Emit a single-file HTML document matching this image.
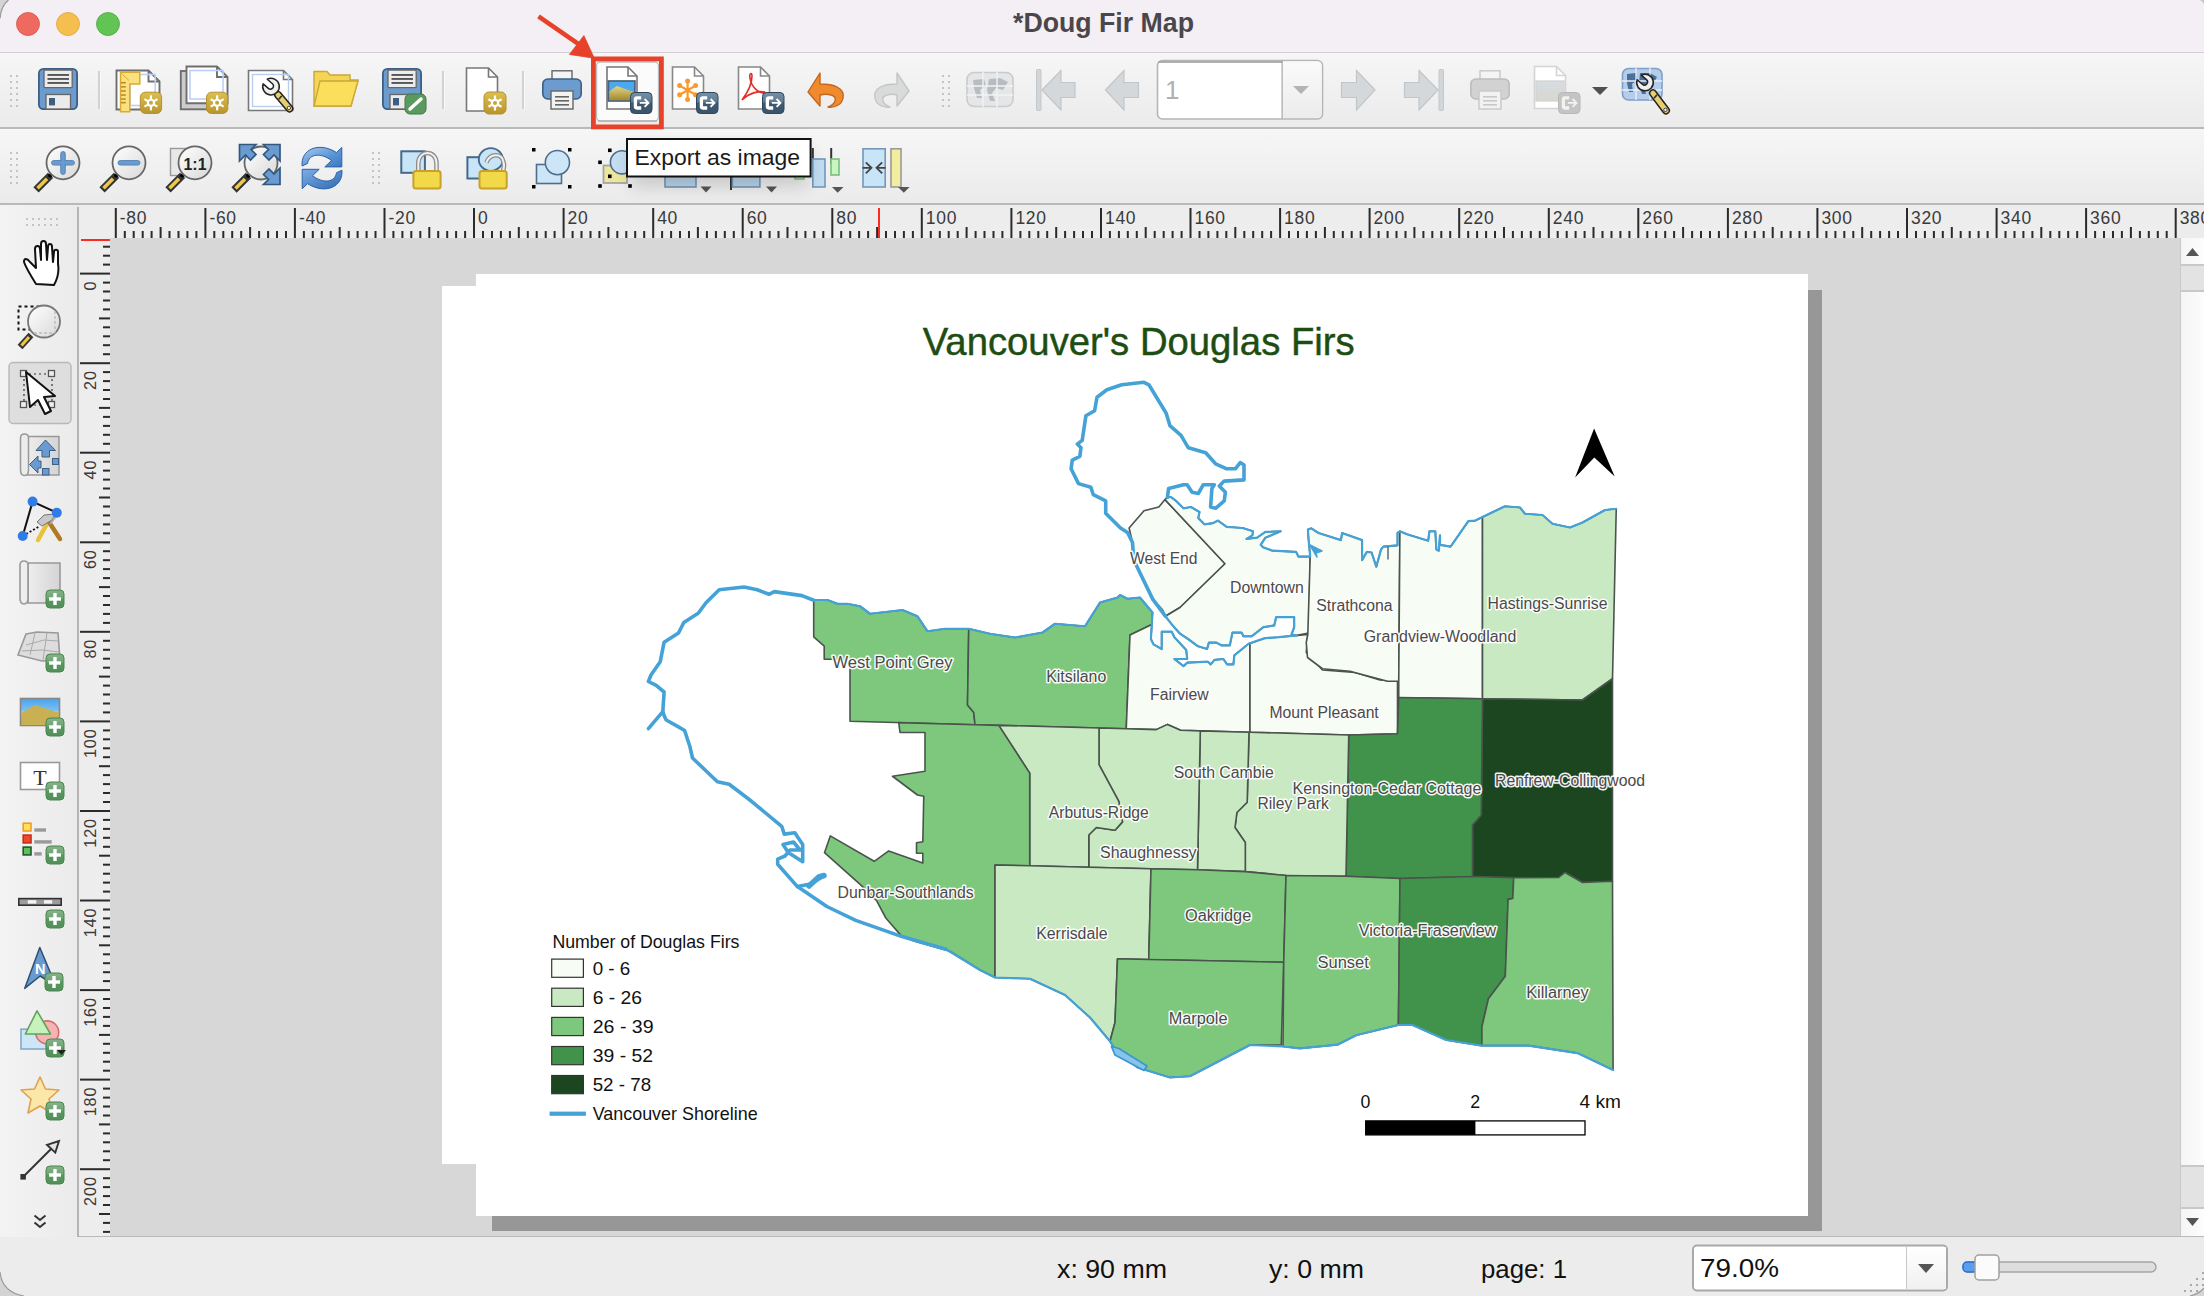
<!DOCTYPE html>
<html><head><meta charset="utf-8"><title>Doug Fir Map</title>
<style>html,body{margin:0;padding:0;overflow:hidden;background:#ececec;} svg{display:block;}</style></head>
<body><svg width="2204" height="1296" viewBox="0 0 2204 1296" style="font-family:'Liberation Sans', sans-serif">
<defs>
<linearGradient id="glass" x1="0" y1="0" x2="1" y2="1"><stop offset="0" stop-color="#ffffff"/><stop offset="1" stop-color="#d8d8d8"/></linearGradient>
<linearGradient id="pic" x1="0" y1="0" x2="0" y2="1"><stop offset="0" stop-color="#4aa3ea"/><stop offset="0.45" stop-color="#7cc0f0"/><stop offset="0.46" stop-color="#d9c47a"/><stop offset="1" stop-color="#a89233"/></linearGradient>
<linearGradient id="gpic" x1="0" y1="0" x2="0" y2="1"><stop offset="0" stop-color="#d6dde3"/><stop offset="1" stop-color="#d9d6cc"/></linearGradient>
<linearGradient id="gold" x1="0" y1="0" x2="0" y2="1"><stop offset="0" stop-color="#dcc04e"/><stop offset="1" stop-color="#b9952c"/></linearGradient>
<linearGradient id="roll" x1="0" y1="0" x2="1" y2="0"><stop offset="0" stop-color="#eeeeee"/><stop offset="1" stop-color="#d4d4d4"/></linearGradient>
<linearGradient id="refr" x1="0" y1="0" x2="1" y2="1"><stop offset="0" stop-color="#a9cbef"/><stop offset="0.55" stop-color="#5d97d6"/><stop offset="1" stop-color="#3a78c3"/></linearGradient><linearGradient id="refr2" x1="0" y1="0" x2="1" y2="1"><stop offset="0" stop-color="#7eaee3"/><stop offset="1" stop-color="#2f6ab5"/></linearGradient>
<linearGradient id="gplus" x1="0" y1="0" x2="0" y2="1"><stop offset="0" stop-color="#86b38a"/><stop offset="0.45" stop-color="#6ea473"/><stop offset="0.5" stop-color="#5a975f"/><stop offset="1" stop-color="#558f5a"/></linearGradient>
<linearGradient id="ebadge" x1="0" y1="0" x2="0" y2="1"><stop offset="0" stop-color="#7690a6"/><stop offset="0.45" stop-color="#5f7a91"/><stop offset="0.5" stop-color="#3f5a70"/><stop offset="1" stop-color="#3a556b"/></linearGradient>
<linearGradient id="hill" x1="0" y1="0" x2="0" y2="1"><stop offset="0" stop-color="#e3d48a"/><stop offset="1" stop-color="#a3892c"/></linearGradient>
<filter id="tipsh" x="-30%" y="-50%" width="160%" height="250%"><feGaussianBlur stdDeviation="9"/></filter>
</defs>
<rect x="0" y="0" width="2204" height="52" fill="#f3eff5"/>
<rect x="0" y="52" width="2204" height="1" fill="#d3d0d5"/>
<circle cx="28" cy="24" r="11.5" fill="#ee6a5f" stroke="#d9534a" stroke-width="0.8"/>
<circle cx="68" cy="24" r="11.5" fill="#f5bf4f" stroke="#dea63a" stroke-width="0.8"/>
<circle cx="108" cy="24" r="11.5" fill="#61c454" stroke="#4eaa41" stroke-width="0.8"/>
<text x="1103.5" y="32" text-anchor="middle" font-family='"Liberation Sans", sans-serif' font-weight="700" font-size="27" fill="#4a474c" textLength="181" lengthAdjust="spacingAndGlyphs">*Doug Fir Map</text>
<defs><linearGradient id="tbg" x1="0" y1="0" x2="0" y2="1"><stop offset="0" stop-color="#f6f6f6"/><stop offset="1" stop-color="#ebebeb"/></linearGradient><linearGradient id="lbg" x1="0" y1="0" x2="1" y2="0"><stop offset="0" stop-color="#f3f3f3"/><stop offset="1" stop-color="#ebebeb"/></linearGradient></defs>
<rect x="0" y="53" width="2204" height="74" fill="url(#tbg)"/>
<rect x="0" y="127" width="2204" height="2" fill="#b9b9b9"/>
<rect x="0" y="129" width="2204" height="74" fill="url(#tbg)"/>
<rect x="0" y="203" width="2204" height="2" fill="#b9b9b9"/>
<rect x="10" y="75" width="2" height="2" fill="#c4c4c4"/><rect x="16" y="75" width="2" height="2" fill="#c4c4c4"/><rect x="10" y="81" width="2" height="2" fill="#c4c4c4"/><rect x="16" y="81" width="2" height="2" fill="#c4c4c4"/><rect x="10" y="87" width="2" height="2" fill="#c4c4c4"/><rect x="16" y="87" width="2" height="2" fill="#c4c4c4"/><rect x="10" y="93" width="2" height="2" fill="#c4c4c4"/><rect x="16" y="93" width="2" height="2" fill="#c4c4c4"/><rect x="10" y="99" width="2" height="2" fill="#c4c4c4"/><rect x="16" y="99" width="2" height="2" fill="#c4c4c4"/><rect x="10" y="105" width="2" height="2" fill="#c4c4c4"/><rect x="16" y="105" width="2" height="2" fill="#c4c4c4"/>
<rect x="942" y="75" width="2" height="2" fill="#c4c4c4"/><rect x="948" y="75" width="2" height="2" fill="#c4c4c4"/><rect x="942" y="81" width="2" height="2" fill="#c4c4c4"/><rect x="948" y="81" width="2" height="2" fill="#c4c4c4"/><rect x="942" y="87" width="2" height="2" fill="#c4c4c4"/><rect x="948" y="87" width="2" height="2" fill="#c4c4c4"/><rect x="942" y="93" width="2" height="2" fill="#c4c4c4"/><rect x="948" y="93" width="2" height="2" fill="#c4c4c4"/><rect x="942" y="99" width="2" height="2" fill="#c4c4c4"/><rect x="948" y="99" width="2" height="2" fill="#c4c4c4"/><rect x="942" y="105" width="2" height="2" fill="#c4c4c4"/><rect x="948" y="105" width="2" height="2" fill="#c4c4c4"/>
<rect x="10" y="152" width="2" height="2" fill="#c4c4c4"/><rect x="16" y="152" width="2" height="2" fill="#c4c4c4"/><rect x="10" y="158" width="2" height="2" fill="#c4c4c4"/><rect x="16" y="158" width="2" height="2" fill="#c4c4c4"/><rect x="10" y="164" width="2" height="2" fill="#c4c4c4"/><rect x="16" y="164" width="2" height="2" fill="#c4c4c4"/><rect x="10" y="170" width="2" height="2" fill="#c4c4c4"/><rect x="16" y="170" width="2" height="2" fill="#c4c4c4"/><rect x="10" y="176" width="2" height="2" fill="#c4c4c4"/><rect x="16" y="176" width="2" height="2" fill="#c4c4c4"/><rect x="10" y="182" width="2" height="2" fill="#c4c4c4"/><rect x="16" y="182" width="2" height="2" fill="#c4c4c4"/>
<rect x="372" y="152" width="2" height="2" fill="#c4c4c4"/><rect x="378" y="152" width="2" height="2" fill="#c4c4c4"/><rect x="372" y="158" width="2" height="2" fill="#c4c4c4"/><rect x="378" y="158" width="2" height="2" fill="#c4c4c4"/><rect x="372" y="164" width="2" height="2" fill="#c4c4c4"/><rect x="378" y="164" width="2" height="2" fill="#c4c4c4"/><rect x="372" y="170" width="2" height="2" fill="#c4c4c4"/><rect x="378" y="170" width="2" height="2" fill="#c4c4c4"/><rect x="372" y="176" width="2" height="2" fill="#c4c4c4"/><rect x="378" y="176" width="2" height="2" fill="#c4c4c4"/><rect x="372" y="182" width="2" height="2" fill="#c4c4c4"/><rect x="378" y="182" width="2" height="2" fill="#c4c4c4"/>
<rect x="98" y="71" width="2" height="38" fill="#d2d2d2"/><rect x="100" y="71" width="1" height="38" fill="#fafafa"/>
<rect x="442" y="71" width="2" height="38" fill="#d2d2d2"/><rect x="444" y="71" width="1" height="38" fill="#fafafa"/>
<rect x="522" y="71" width="2" height="38" fill="#d2d2d2"/><rect x="524" y="71" width="1" height="38" fill="#fafafa"/>
<rect x="0" y="205" width="78" height="1032" fill="url(#lbg)"/>
<rect x="77" y="207" width="2" height="1030" fill="#b4b4b4"/>
<rect x="26" y="218" width="2" height="2" fill="#c4c4c4"/><rect x="32" y="218" width="2" height="2" fill="#c4c4c4"/><rect x="38" y="218" width="2" height="2" fill="#c4c4c4"/><rect x="44" y="218" width="2" height="2" fill="#c4c4c4"/><rect x="50" y="218" width="2" height="2" fill="#c4c4c4"/><rect x="56" y="218" width="2" height="2" fill="#c4c4c4"/><rect x="26" y="224" width="2" height="2" fill="#c4c4c4"/><rect x="32" y="224" width="2" height="2" fill="#c4c4c4"/><rect x="38" y="224" width="2" height="2" fill="#c4c4c4"/><rect x="44" y="224" width="2" height="2" fill="#c4c4c4"/><rect x="50" y="224" width="2" height="2" fill="#c4c4c4"/><rect x="56" y="224" width="2" height="2" fill="#c4c4c4"/>
<rect x="79" y="205" width="2101" height="33" fill="#ededed"/>
<rect x="79" y="238" width="31" height="998" fill="#ededed"/>
<rect x="114.8" y="208" width="2" height="30" fill="#2b2b2b"/>
<text x="119.8" y="224" font-family='"Liberation Sans", sans-serif' font-size="17.5" letter-spacing="0.7" fill="#3a3a3a">-80</text>
<rect x="123.8" y="231" width="2" height="7" fill="#2b2b2b"/>
<rect x="132.7" y="231" width="2" height="7" fill="#2b2b2b"/>
<rect x="141.7" y="231" width="2" height="7" fill="#2b2b2b"/>
<rect x="150.6" y="231" width="2" height="7" fill="#2b2b2b"/>
<rect x="159.6" y="227" width="2" height="11" fill="#2b2b2b"/>
<rect x="168.5" y="231" width="2" height="7" fill="#2b2b2b"/>
<rect x="177.5" y="231" width="2" height="7" fill="#2b2b2b"/>
<rect x="186.4" y="231" width="2" height="7" fill="#2b2b2b"/>
<rect x="195.4" y="231" width="2" height="7" fill="#2b2b2b"/>
<rect x="204.4" y="208" width="2" height="30" fill="#2b2b2b"/>
<text x="209.4" y="224" font-family='"Liberation Sans", sans-serif' font-size="17.5" letter-spacing="0.7" fill="#3a3a3a">-60</text>
<rect x="213.3" y="231" width="2" height="7" fill="#2b2b2b"/>
<rect x="222.3" y="231" width="2" height="7" fill="#2b2b2b"/>
<rect x="231.2" y="231" width="2" height="7" fill="#2b2b2b"/>
<rect x="240.2" y="231" width="2" height="7" fill="#2b2b2b"/>
<rect x="249.1" y="227" width="2" height="11" fill="#2b2b2b"/>
<rect x="258.1" y="231" width="2" height="7" fill="#2b2b2b"/>
<rect x="267.1" y="231" width="2" height="7" fill="#2b2b2b"/>
<rect x="276.0" y="231" width="2" height="7" fill="#2b2b2b"/>
<rect x="285.0" y="231" width="2" height="7" fill="#2b2b2b"/>
<rect x="293.9" y="208" width="2" height="30" fill="#2b2b2b"/>
<text x="298.9" y="224" font-family='"Liberation Sans", sans-serif' font-size="17.5" letter-spacing="0.7" fill="#3a3a3a">-40</text>
<rect x="302.9" y="231" width="2" height="7" fill="#2b2b2b"/>
<rect x="311.8" y="231" width="2" height="7" fill="#2b2b2b"/>
<rect x="320.8" y="231" width="2" height="7" fill="#2b2b2b"/>
<rect x="329.7" y="231" width="2" height="7" fill="#2b2b2b"/>
<rect x="338.7" y="227" width="2" height="11" fill="#2b2b2b"/>
<rect x="347.7" y="231" width="2" height="7" fill="#2b2b2b"/>
<rect x="356.6" y="231" width="2" height="7" fill="#2b2b2b"/>
<rect x="365.6" y="231" width="2" height="7" fill="#2b2b2b"/>
<rect x="374.5" y="231" width="2" height="7" fill="#2b2b2b"/>
<rect x="383.5" y="208" width="2" height="30" fill="#2b2b2b"/>
<text x="388.5" y="224" font-family='"Liberation Sans", sans-serif' font-size="17.5" letter-spacing="0.7" fill="#3a3a3a">-20</text>
<rect x="392.4" y="231" width="2" height="7" fill="#2b2b2b"/>
<rect x="401.4" y="231" width="2" height="7" fill="#2b2b2b"/>
<rect x="410.3" y="231" width="2" height="7" fill="#2b2b2b"/>
<rect x="419.3" y="231" width="2" height="7" fill="#2b2b2b"/>
<rect x="428.3" y="227" width="2" height="11" fill="#2b2b2b"/>
<rect x="437.2" y="231" width="2" height="7" fill="#2b2b2b"/>
<rect x="446.2" y="231" width="2" height="7" fill="#2b2b2b"/>
<rect x="455.1" y="231" width="2" height="7" fill="#2b2b2b"/>
<rect x="464.1" y="231" width="2" height="7" fill="#2b2b2b"/>
<rect x="473.0" y="208" width="2" height="30" fill="#2b2b2b"/>
<text x="478.0" y="224" font-family='"Liberation Sans", sans-serif' font-size="17.5" letter-spacing="0.7" fill="#3a3a3a">0</text>
<rect x="482.0" y="231" width="2" height="7" fill="#2b2b2b"/>
<rect x="491.0" y="231" width="2" height="7" fill="#2b2b2b"/>
<rect x="499.9" y="231" width="2" height="7" fill="#2b2b2b"/>
<rect x="508.9" y="231" width="2" height="7" fill="#2b2b2b"/>
<rect x="517.8" y="227" width="2" height="11" fill="#2b2b2b"/>
<rect x="526.8" y="231" width="2" height="7" fill="#2b2b2b"/>
<rect x="535.7" y="231" width="2" height="7" fill="#2b2b2b"/>
<rect x="544.7" y="231" width="2" height="7" fill="#2b2b2b"/>
<rect x="553.6" y="231" width="2" height="7" fill="#2b2b2b"/>
<rect x="562.6" y="208" width="2" height="30" fill="#2b2b2b"/>
<text x="567.6" y="224" font-family='"Liberation Sans", sans-serif' font-size="17.5" letter-spacing="0.7" fill="#3a3a3a">20</text>
<rect x="571.6" y="231" width="2" height="7" fill="#2b2b2b"/>
<rect x="580.5" y="231" width="2" height="7" fill="#2b2b2b"/>
<rect x="589.5" y="231" width="2" height="7" fill="#2b2b2b"/>
<rect x="598.4" y="231" width="2" height="7" fill="#2b2b2b"/>
<rect x="607.4" y="227" width="2" height="11" fill="#2b2b2b"/>
<rect x="616.3" y="231" width="2" height="7" fill="#2b2b2b"/>
<rect x="625.3" y="231" width="2" height="7" fill="#2b2b2b"/>
<rect x="634.2" y="231" width="2" height="7" fill="#2b2b2b"/>
<rect x="643.2" y="231" width="2" height="7" fill="#2b2b2b"/>
<rect x="652.2" y="208" width="2" height="30" fill="#2b2b2b"/>
<text x="657.2" y="224" font-family='"Liberation Sans", sans-serif' font-size="17.5" letter-spacing="0.7" fill="#3a3a3a">40</text>
<rect x="661.1" y="231" width="2" height="7" fill="#2b2b2b"/>
<rect x="670.1" y="231" width="2" height="7" fill="#2b2b2b"/>
<rect x="679.0" y="231" width="2" height="7" fill="#2b2b2b"/>
<rect x="688.0" y="231" width="2" height="7" fill="#2b2b2b"/>
<rect x="696.9" y="227" width="2" height="11" fill="#2b2b2b"/>
<rect x="705.9" y="231" width="2" height="7" fill="#2b2b2b"/>
<rect x="714.9" y="231" width="2" height="7" fill="#2b2b2b"/>
<rect x="723.8" y="231" width="2" height="7" fill="#2b2b2b"/>
<rect x="732.8" y="231" width="2" height="7" fill="#2b2b2b"/>
<rect x="741.7" y="208" width="2" height="30" fill="#2b2b2b"/>
<text x="746.7" y="224" font-family='"Liberation Sans", sans-serif' font-size="17.5" letter-spacing="0.7" fill="#3a3a3a">60</text>
<rect x="750.7" y="231" width="2" height="7" fill="#2b2b2b"/>
<rect x="759.6" y="231" width="2" height="7" fill="#2b2b2b"/>
<rect x="768.6" y="231" width="2" height="7" fill="#2b2b2b"/>
<rect x="777.5" y="231" width="2" height="7" fill="#2b2b2b"/>
<rect x="786.5" y="227" width="2" height="11" fill="#2b2b2b"/>
<rect x="795.5" y="231" width="2" height="7" fill="#2b2b2b"/>
<rect x="804.4" y="231" width="2" height="7" fill="#2b2b2b"/>
<rect x="813.4" y="231" width="2" height="7" fill="#2b2b2b"/>
<rect x="822.3" y="231" width="2" height="7" fill="#2b2b2b"/>
<rect x="831.3" y="208" width="2" height="30" fill="#2b2b2b"/>
<text x="836.3" y="224" font-family='"Liberation Sans", sans-serif' font-size="17.5" letter-spacing="0.7" fill="#3a3a3a">80</text>
<rect x="840.2" y="231" width="2" height="7" fill="#2b2b2b"/>
<rect x="849.2" y="231" width="2" height="7" fill="#2b2b2b"/>
<rect x="858.1" y="231" width="2" height="7" fill="#2b2b2b"/>
<rect x="867.1" y="231" width="2" height="7" fill="#2b2b2b"/>
<rect x="876.1" y="227" width="2" height="11" fill="#2b2b2b"/>
<rect x="885.0" y="231" width="2" height="7" fill="#2b2b2b"/>
<rect x="894.0" y="231" width="2" height="7" fill="#2b2b2b"/>
<rect x="902.9" y="231" width="2" height="7" fill="#2b2b2b"/>
<rect x="911.9" y="231" width="2" height="7" fill="#2b2b2b"/>
<rect x="920.8" y="208" width="2" height="30" fill="#2b2b2b"/>
<text x="925.8" y="224" font-family='"Liberation Sans", sans-serif' font-size="17.5" letter-spacing="0.7" fill="#3a3a3a">100</text>
<rect x="929.8" y="231" width="2" height="7" fill="#2b2b2b"/>
<rect x="938.8" y="231" width="2" height="7" fill="#2b2b2b"/>
<rect x="947.7" y="231" width="2" height="7" fill="#2b2b2b"/>
<rect x="956.7" y="231" width="2" height="7" fill="#2b2b2b"/>
<rect x="965.6" y="227" width="2" height="11" fill="#2b2b2b"/>
<rect x="974.6" y="231" width="2" height="7" fill="#2b2b2b"/>
<rect x="983.5" y="231" width="2" height="7" fill="#2b2b2b"/>
<rect x="992.5" y="231" width="2" height="7" fill="#2b2b2b"/>
<rect x="1001.4" y="231" width="2" height="7" fill="#2b2b2b"/>
<rect x="1010.4" y="208" width="2" height="30" fill="#2b2b2b"/>
<text x="1015.4" y="224" font-family='"Liberation Sans", sans-serif' font-size="17.5" letter-spacing="0.7" fill="#3a3a3a">120</text>
<rect x="1019.4" y="231" width="2" height="7" fill="#2b2b2b"/>
<rect x="1028.3" y="231" width="2" height="7" fill="#2b2b2b"/>
<rect x="1037.3" y="231" width="2" height="7" fill="#2b2b2b"/>
<rect x="1046.2" y="231" width="2" height="7" fill="#2b2b2b"/>
<rect x="1055.2" y="227" width="2" height="11" fill="#2b2b2b"/>
<rect x="1064.1" y="231" width="2" height="7" fill="#2b2b2b"/>
<rect x="1073.1" y="231" width="2" height="7" fill="#2b2b2b"/>
<rect x="1082.0" y="231" width="2" height="7" fill="#2b2b2b"/>
<rect x="1091.0" y="231" width="2" height="7" fill="#2b2b2b"/>
<rect x="1100.0" y="208" width="2" height="30" fill="#2b2b2b"/>
<text x="1105.0" y="224" font-family='"Liberation Sans", sans-serif' font-size="17.5" letter-spacing="0.7" fill="#3a3a3a">140</text>
<rect x="1108.9" y="231" width="2" height="7" fill="#2b2b2b"/>
<rect x="1117.9" y="231" width="2" height="7" fill="#2b2b2b"/>
<rect x="1126.8" y="231" width="2" height="7" fill="#2b2b2b"/>
<rect x="1135.8" y="231" width="2" height="7" fill="#2b2b2b"/>
<rect x="1144.7" y="227" width="2" height="11" fill="#2b2b2b"/>
<rect x="1153.7" y="231" width="2" height="7" fill="#2b2b2b"/>
<rect x="1162.7" y="231" width="2" height="7" fill="#2b2b2b"/>
<rect x="1171.6" y="231" width="2" height="7" fill="#2b2b2b"/>
<rect x="1180.6" y="231" width="2" height="7" fill="#2b2b2b"/>
<rect x="1189.5" y="208" width="2" height="30" fill="#2b2b2b"/>
<text x="1194.5" y="224" font-family='"Liberation Sans", sans-serif' font-size="17.5" letter-spacing="0.7" fill="#3a3a3a">160</text>
<rect x="1198.5" y="231" width="2" height="7" fill="#2b2b2b"/>
<rect x="1207.4" y="231" width="2" height="7" fill="#2b2b2b"/>
<rect x="1216.4" y="231" width="2" height="7" fill="#2b2b2b"/>
<rect x="1225.3" y="231" width="2" height="7" fill="#2b2b2b"/>
<rect x="1234.3" y="227" width="2" height="11" fill="#2b2b2b"/>
<rect x="1243.3" y="231" width="2" height="7" fill="#2b2b2b"/>
<rect x="1252.2" y="231" width="2" height="7" fill="#2b2b2b"/>
<rect x="1261.2" y="231" width="2" height="7" fill="#2b2b2b"/>
<rect x="1270.1" y="231" width="2" height="7" fill="#2b2b2b"/>
<rect x="1279.1" y="208" width="2" height="30" fill="#2b2b2b"/>
<text x="1284.1" y="224" font-family='"Liberation Sans", sans-serif' font-size="17.5" letter-spacing="0.7" fill="#3a3a3a">180</text>
<rect x="1288.0" y="231" width="2" height="7" fill="#2b2b2b"/>
<rect x="1297.0" y="231" width="2" height="7" fill="#2b2b2b"/>
<rect x="1305.9" y="231" width="2" height="7" fill="#2b2b2b"/>
<rect x="1314.9" y="231" width="2" height="7" fill="#2b2b2b"/>
<rect x="1323.9" y="227" width="2" height="11" fill="#2b2b2b"/>
<rect x="1332.8" y="231" width="2" height="7" fill="#2b2b2b"/>
<rect x="1341.8" y="231" width="2" height="7" fill="#2b2b2b"/>
<rect x="1350.7" y="231" width="2" height="7" fill="#2b2b2b"/>
<rect x="1359.7" y="231" width="2" height="7" fill="#2b2b2b"/>
<rect x="1368.6" y="208" width="2" height="30" fill="#2b2b2b"/>
<text x="1373.6" y="224" font-family='"Liberation Sans", sans-serif' font-size="17.5" letter-spacing="0.7" fill="#3a3a3a">200</text>
<rect x="1377.6" y="231" width="2" height="7" fill="#2b2b2b"/>
<rect x="1386.6" y="231" width="2" height="7" fill="#2b2b2b"/>
<rect x="1395.5" y="231" width="2" height="7" fill="#2b2b2b"/>
<rect x="1404.5" y="231" width="2" height="7" fill="#2b2b2b"/>
<rect x="1413.4" y="227" width="2" height="11" fill="#2b2b2b"/>
<rect x="1422.4" y="231" width="2" height="7" fill="#2b2b2b"/>
<rect x="1431.3" y="231" width="2" height="7" fill="#2b2b2b"/>
<rect x="1440.3" y="231" width="2" height="7" fill="#2b2b2b"/>
<rect x="1449.2" y="231" width="2" height="7" fill="#2b2b2b"/>
<rect x="1458.2" y="208" width="2" height="30" fill="#2b2b2b"/>
<text x="1463.2" y="224" font-family='"Liberation Sans", sans-serif' font-size="17.5" letter-spacing="0.7" fill="#3a3a3a">220</text>
<rect x="1467.2" y="231" width="2" height="7" fill="#2b2b2b"/>
<rect x="1476.1" y="231" width="2" height="7" fill="#2b2b2b"/>
<rect x="1485.1" y="231" width="2" height="7" fill="#2b2b2b"/>
<rect x="1494.0" y="231" width="2" height="7" fill="#2b2b2b"/>
<rect x="1503.0" y="227" width="2" height="11" fill="#2b2b2b"/>
<rect x="1511.9" y="231" width="2" height="7" fill="#2b2b2b"/>
<rect x="1520.9" y="231" width="2" height="7" fill="#2b2b2b"/>
<rect x="1529.8" y="231" width="2" height="7" fill="#2b2b2b"/>
<rect x="1538.8" y="231" width="2" height="7" fill="#2b2b2b"/>
<rect x="1547.8" y="208" width="2" height="30" fill="#2b2b2b"/>
<text x="1552.8" y="224" font-family='"Liberation Sans", sans-serif' font-size="17.5" letter-spacing="0.7" fill="#3a3a3a">240</text>
<rect x="1556.7" y="231" width="2" height="7" fill="#2b2b2b"/>
<rect x="1565.7" y="231" width="2" height="7" fill="#2b2b2b"/>
<rect x="1574.6" y="231" width="2" height="7" fill="#2b2b2b"/>
<rect x="1583.6" y="231" width="2" height="7" fill="#2b2b2b"/>
<rect x="1592.5" y="227" width="2" height="11" fill="#2b2b2b"/>
<rect x="1601.5" y="231" width="2" height="7" fill="#2b2b2b"/>
<rect x="1610.5" y="231" width="2" height="7" fill="#2b2b2b"/>
<rect x="1619.4" y="231" width="2" height="7" fill="#2b2b2b"/>
<rect x="1628.4" y="231" width="2" height="7" fill="#2b2b2b"/>
<rect x="1637.3" y="208" width="2" height="30" fill="#2b2b2b"/>
<text x="1642.3" y="224" font-family='"Liberation Sans", sans-serif' font-size="17.5" letter-spacing="0.7" fill="#3a3a3a">260</text>
<rect x="1646.3" y="231" width="2" height="7" fill="#2b2b2b"/>
<rect x="1655.2" y="231" width="2" height="7" fill="#2b2b2b"/>
<rect x="1664.2" y="231" width="2" height="7" fill="#2b2b2b"/>
<rect x="1673.1" y="231" width="2" height="7" fill="#2b2b2b"/>
<rect x="1682.1" y="227" width="2" height="11" fill="#2b2b2b"/>
<rect x="1691.1" y="231" width="2" height="7" fill="#2b2b2b"/>
<rect x="1700.0" y="231" width="2" height="7" fill="#2b2b2b"/>
<rect x="1709.0" y="231" width="2" height="7" fill="#2b2b2b"/>
<rect x="1717.9" y="231" width="2" height="7" fill="#2b2b2b"/>
<rect x="1726.9" y="208" width="2" height="30" fill="#2b2b2b"/>
<text x="1731.9" y="224" font-family='"Liberation Sans", sans-serif' font-size="17.5" letter-spacing="0.7" fill="#3a3a3a">280</text>
<rect x="1735.8" y="231" width="2" height="7" fill="#2b2b2b"/>
<rect x="1744.8" y="231" width="2" height="7" fill="#2b2b2b"/>
<rect x="1753.7" y="231" width="2" height="7" fill="#2b2b2b"/>
<rect x="1762.7" y="231" width="2" height="7" fill="#2b2b2b"/>
<rect x="1771.7" y="227" width="2" height="11" fill="#2b2b2b"/>
<rect x="1780.6" y="231" width="2" height="7" fill="#2b2b2b"/>
<rect x="1789.6" y="231" width="2" height="7" fill="#2b2b2b"/>
<rect x="1798.5" y="231" width="2" height="7" fill="#2b2b2b"/>
<rect x="1807.5" y="231" width="2" height="7" fill="#2b2b2b"/>
<rect x="1816.4" y="208" width="2" height="30" fill="#2b2b2b"/>
<text x="1821.4" y="224" font-family='"Liberation Sans", sans-serif' font-size="17.5" letter-spacing="0.7" fill="#3a3a3a">300</text>
<rect x="1825.4" y="231" width="2" height="7" fill="#2b2b2b"/>
<rect x="1834.4" y="231" width="2" height="7" fill="#2b2b2b"/>
<rect x="1843.3" y="231" width="2" height="7" fill="#2b2b2b"/>
<rect x="1852.3" y="231" width="2" height="7" fill="#2b2b2b"/>
<rect x="1861.2" y="227" width="2" height="11" fill="#2b2b2b"/>
<rect x="1870.2" y="231" width="2" height="7" fill="#2b2b2b"/>
<rect x="1879.1" y="231" width="2" height="7" fill="#2b2b2b"/>
<rect x="1888.1" y="231" width="2" height="7" fill="#2b2b2b"/>
<rect x="1897.0" y="231" width="2" height="7" fill="#2b2b2b"/>
<rect x="1906.0" y="208" width="2" height="30" fill="#2b2b2b"/>
<text x="1911.0" y="224" font-family='"Liberation Sans", sans-serif' font-size="17.5" letter-spacing="0.7" fill="#3a3a3a">320</text>
<rect x="1915.0" y="231" width="2" height="7" fill="#2b2b2b"/>
<rect x="1923.9" y="231" width="2" height="7" fill="#2b2b2b"/>
<rect x="1932.9" y="231" width="2" height="7" fill="#2b2b2b"/>
<rect x="1941.8" y="231" width="2" height="7" fill="#2b2b2b"/>
<rect x="1950.8" y="227" width="2" height="11" fill="#2b2b2b"/>
<rect x="1959.7" y="231" width="2" height="7" fill="#2b2b2b"/>
<rect x="1968.7" y="231" width="2" height="7" fill="#2b2b2b"/>
<rect x="1977.6" y="231" width="2" height="7" fill="#2b2b2b"/>
<rect x="1986.6" y="231" width="2" height="7" fill="#2b2b2b"/>
<rect x="1995.6" y="208" width="2" height="30" fill="#2b2b2b"/>
<text x="2000.6" y="224" font-family='"Liberation Sans", sans-serif' font-size="17.5" letter-spacing="0.7" fill="#3a3a3a">340</text>
<rect x="2004.5" y="231" width="2" height="7" fill="#2b2b2b"/>
<rect x="2013.5" y="231" width="2" height="7" fill="#2b2b2b"/>
<rect x="2022.4" y="231" width="2" height="7" fill="#2b2b2b"/>
<rect x="2031.4" y="231" width="2" height="7" fill="#2b2b2b"/>
<rect x="2040.3" y="227" width="2" height="11" fill="#2b2b2b"/>
<rect x="2049.3" y="231" width="2" height="7" fill="#2b2b2b"/>
<rect x="2058.3" y="231" width="2" height="7" fill="#2b2b2b"/>
<rect x="2067.2" y="231" width="2" height="7" fill="#2b2b2b"/>
<rect x="2076.2" y="231" width="2" height="7" fill="#2b2b2b"/>
<rect x="2085.1" y="208" width="2" height="30" fill="#2b2b2b"/>
<text x="2090.1" y="224" font-family='"Liberation Sans", sans-serif' font-size="17.5" letter-spacing="0.7" fill="#3a3a3a">360</text>
<rect x="2094.1" y="231" width="2" height="7" fill="#2b2b2b"/>
<rect x="2103.0" y="231" width="2" height="7" fill="#2b2b2b"/>
<rect x="2112.0" y="231" width="2" height="7" fill="#2b2b2b"/>
<rect x="2120.9" y="231" width="2" height="7" fill="#2b2b2b"/>
<rect x="2129.9" y="227" width="2" height="11" fill="#2b2b2b"/>
<rect x="2138.9" y="231" width="2" height="7" fill="#2b2b2b"/>
<rect x="2147.8" y="231" width="2" height="7" fill="#2b2b2b"/>
<rect x="2156.8" y="231" width="2" height="7" fill="#2b2b2b"/>
<rect x="2165.7" y="231" width="2" height="7" fill="#2b2b2b"/>
<rect x="2174.7" y="208" width="2" height="30" fill="#2b2b2b"/>
<text x="2179.7" y="224" font-family='"Liberation Sans", sans-serif' font-size="17.5" letter-spacing="0.7" fill="#3a3a3a">380</text>
<rect x="103" y="245.7" width="7" height="2" fill="#2b2b2b"/>
<rect x="103" y="254.7" width="7" height="2" fill="#2b2b2b"/>
<rect x="103" y="263.6" width="7" height="2" fill="#2b2b2b"/>
<rect x="80" y="272.6" width="30" height="2" fill="#2b2b2b"/>
<text transform="translate(95.8,280.6) rotate(-90)" text-anchor="end" font-family='"Liberation Sans", sans-serif' font-size="16.2" letter-spacing="0.9" fill="#3a3a3a">0</text>
<rect x="103" y="281.6" width="7" height="2" fill="#2b2b2b"/>
<rect x="103" y="290.5" width="7" height="2" fill="#2b2b2b"/>
<rect x="103" y="299.5" width="7" height="2" fill="#2b2b2b"/>
<rect x="103" y="308.4" width="7" height="2" fill="#2b2b2b"/>
<rect x="99" y="317.4" width="11" height="2" fill="#2b2b2b"/>
<rect x="103" y="326.3" width="7" height="2" fill="#2b2b2b"/>
<rect x="103" y="335.3" width="7" height="2" fill="#2b2b2b"/>
<rect x="103" y="344.2" width="7" height="2" fill="#2b2b2b"/>
<rect x="103" y="353.2" width="7" height="2" fill="#2b2b2b"/>
<rect x="80" y="362.2" width="30" height="2" fill="#2b2b2b"/>
<text transform="translate(95.8,370.2) rotate(-90)" text-anchor="end" font-family='"Liberation Sans", sans-serif' font-size="16.2" letter-spacing="0.9" fill="#3a3a3a">20</text>
<rect x="103" y="371.1" width="7" height="2" fill="#2b2b2b"/>
<rect x="103" y="380.1" width="7" height="2" fill="#2b2b2b"/>
<rect x="103" y="389.0" width="7" height="2" fill="#2b2b2b"/>
<rect x="103" y="398.0" width="7" height="2" fill="#2b2b2b"/>
<rect x="99" y="406.9" width="11" height="2" fill="#2b2b2b"/>
<rect x="103" y="415.9" width="7" height="2" fill="#2b2b2b"/>
<rect x="103" y="424.9" width="7" height="2" fill="#2b2b2b"/>
<rect x="103" y="433.8" width="7" height="2" fill="#2b2b2b"/>
<rect x="103" y="442.8" width="7" height="2" fill="#2b2b2b"/>
<rect x="80" y="451.7" width="30" height="2" fill="#2b2b2b"/>
<text transform="translate(95.8,459.7) rotate(-90)" text-anchor="end" font-family='"Liberation Sans", sans-serif' font-size="16.2" letter-spacing="0.9" fill="#3a3a3a">40</text>
<rect x="103" y="460.7" width="7" height="2" fill="#2b2b2b"/>
<rect x="103" y="469.6" width="7" height="2" fill="#2b2b2b"/>
<rect x="103" y="478.6" width="7" height="2" fill="#2b2b2b"/>
<rect x="103" y="487.5" width="7" height="2" fill="#2b2b2b"/>
<rect x="99" y="496.5" width="11" height="2" fill="#2b2b2b"/>
<rect x="103" y="505.5" width="7" height="2" fill="#2b2b2b"/>
<rect x="103" y="514.4" width="7" height="2" fill="#2b2b2b"/>
<rect x="103" y="523.4" width="7" height="2" fill="#2b2b2b"/>
<rect x="103" y="532.3" width="7" height="2" fill="#2b2b2b"/>
<rect x="80" y="541.3" width="30" height="2" fill="#2b2b2b"/>
<text transform="translate(95.8,549.3) rotate(-90)" text-anchor="end" font-family='"Liberation Sans", sans-serif' font-size="16.2" letter-spacing="0.9" fill="#3a3a3a">60</text>
<rect x="103" y="550.2" width="7" height="2" fill="#2b2b2b"/>
<rect x="103" y="559.2" width="7" height="2" fill="#2b2b2b"/>
<rect x="103" y="568.1" width="7" height="2" fill="#2b2b2b"/>
<rect x="103" y="577.1" width="7" height="2" fill="#2b2b2b"/>
<rect x="99" y="586.1" width="11" height="2" fill="#2b2b2b"/>
<rect x="103" y="595.0" width="7" height="2" fill="#2b2b2b"/>
<rect x="103" y="604.0" width="7" height="2" fill="#2b2b2b"/>
<rect x="103" y="612.9" width="7" height="2" fill="#2b2b2b"/>
<rect x="103" y="621.9" width="7" height="2" fill="#2b2b2b"/>
<rect x="80" y="630.8" width="30" height="2" fill="#2b2b2b"/>
<text transform="translate(95.8,638.8) rotate(-90)" text-anchor="end" font-family='"Liberation Sans", sans-serif' font-size="16.2" letter-spacing="0.9" fill="#3a3a3a">80</text>
<rect x="103" y="639.8" width="7" height="2" fill="#2b2b2b"/>
<rect x="103" y="648.8" width="7" height="2" fill="#2b2b2b"/>
<rect x="103" y="657.7" width="7" height="2" fill="#2b2b2b"/>
<rect x="103" y="666.7" width="7" height="2" fill="#2b2b2b"/>
<rect x="99" y="675.6" width="11" height="2" fill="#2b2b2b"/>
<rect x="103" y="684.6" width="7" height="2" fill="#2b2b2b"/>
<rect x="103" y="693.5" width="7" height="2" fill="#2b2b2b"/>
<rect x="103" y="702.5" width="7" height="2" fill="#2b2b2b"/>
<rect x="103" y="711.4" width="7" height="2" fill="#2b2b2b"/>
<rect x="80" y="720.4" width="30" height="2" fill="#2b2b2b"/>
<text transform="translate(95.8,728.4) rotate(-90)" text-anchor="end" font-family='"Liberation Sans", sans-serif' font-size="16.2" letter-spacing="0.9" fill="#3a3a3a">100</text>
<rect x="103" y="729.4" width="7" height="2" fill="#2b2b2b"/>
<rect x="103" y="738.3" width="7" height="2" fill="#2b2b2b"/>
<rect x="103" y="747.3" width="7" height="2" fill="#2b2b2b"/>
<rect x="103" y="756.2" width="7" height="2" fill="#2b2b2b"/>
<rect x="99" y="765.2" width="11" height="2" fill="#2b2b2b"/>
<rect x="103" y="774.1" width="7" height="2" fill="#2b2b2b"/>
<rect x="103" y="783.1" width="7" height="2" fill="#2b2b2b"/>
<rect x="103" y="792.0" width="7" height="2" fill="#2b2b2b"/>
<rect x="103" y="801.0" width="7" height="2" fill="#2b2b2b"/>
<rect x="80" y="810.0" width="30" height="2" fill="#2b2b2b"/>
<text transform="translate(95.8,818.0) rotate(-90)" text-anchor="end" font-family='"Liberation Sans", sans-serif' font-size="16.2" letter-spacing="0.9" fill="#3a3a3a">120</text>
<rect x="103" y="818.9" width="7" height="2" fill="#2b2b2b"/>
<rect x="103" y="827.9" width="7" height="2" fill="#2b2b2b"/>
<rect x="103" y="836.8" width="7" height="2" fill="#2b2b2b"/>
<rect x="103" y="845.8" width="7" height="2" fill="#2b2b2b"/>
<rect x="99" y="854.7" width="11" height="2" fill="#2b2b2b"/>
<rect x="103" y="863.7" width="7" height="2" fill="#2b2b2b"/>
<rect x="103" y="872.7" width="7" height="2" fill="#2b2b2b"/>
<rect x="103" y="881.6" width="7" height="2" fill="#2b2b2b"/>
<rect x="103" y="890.6" width="7" height="2" fill="#2b2b2b"/>
<rect x="80" y="899.5" width="30" height="2" fill="#2b2b2b"/>
<text transform="translate(95.8,907.5) rotate(-90)" text-anchor="end" font-family='"Liberation Sans", sans-serif' font-size="16.2" letter-spacing="0.9" fill="#3a3a3a">140</text>
<rect x="103" y="908.5" width="7" height="2" fill="#2b2b2b"/>
<rect x="103" y="917.4" width="7" height="2" fill="#2b2b2b"/>
<rect x="103" y="926.4" width="7" height="2" fill="#2b2b2b"/>
<rect x="103" y="935.3" width="7" height="2" fill="#2b2b2b"/>
<rect x="99" y="944.3" width="11" height="2" fill="#2b2b2b"/>
<rect x="103" y="953.3" width="7" height="2" fill="#2b2b2b"/>
<rect x="103" y="962.2" width="7" height="2" fill="#2b2b2b"/>
<rect x="103" y="971.2" width="7" height="2" fill="#2b2b2b"/>
<rect x="103" y="980.1" width="7" height="2" fill="#2b2b2b"/>
<rect x="80" y="989.1" width="30" height="2" fill="#2b2b2b"/>
<text transform="translate(95.8,997.1) rotate(-90)" text-anchor="end" font-family='"Liberation Sans", sans-serif' font-size="16.2" letter-spacing="0.9" fill="#3a3a3a">160</text>
<rect x="103" y="998.0" width="7" height="2" fill="#2b2b2b"/>
<rect x="103" y="1007.0" width="7" height="2" fill="#2b2b2b"/>
<rect x="103" y="1015.9" width="7" height="2" fill="#2b2b2b"/>
<rect x="103" y="1024.9" width="7" height="2" fill="#2b2b2b"/>
<rect x="99" y="1033.9" width="11" height="2" fill="#2b2b2b"/>
<rect x="103" y="1042.8" width="7" height="2" fill="#2b2b2b"/>
<rect x="103" y="1051.8" width="7" height="2" fill="#2b2b2b"/>
<rect x="103" y="1060.7" width="7" height="2" fill="#2b2b2b"/>
<rect x="103" y="1069.7" width="7" height="2" fill="#2b2b2b"/>
<rect x="80" y="1078.6" width="30" height="2" fill="#2b2b2b"/>
<text transform="translate(95.8,1086.6) rotate(-90)" text-anchor="end" font-family='"Liberation Sans", sans-serif' font-size="16.2" letter-spacing="0.9" fill="#3a3a3a">180</text>
<rect x="103" y="1087.6" width="7" height="2" fill="#2b2b2b"/>
<rect x="103" y="1096.6" width="7" height="2" fill="#2b2b2b"/>
<rect x="103" y="1105.5" width="7" height="2" fill="#2b2b2b"/>
<rect x="103" y="1114.5" width="7" height="2" fill="#2b2b2b"/>
<rect x="99" y="1123.4" width="11" height="2" fill="#2b2b2b"/>
<rect x="103" y="1132.4" width="7" height="2" fill="#2b2b2b"/>
<rect x="103" y="1141.3" width="7" height="2" fill="#2b2b2b"/>
<rect x="103" y="1150.3" width="7" height="2" fill="#2b2b2b"/>
<rect x="103" y="1159.2" width="7" height="2" fill="#2b2b2b"/>
<rect x="80" y="1168.2" width="30" height="2" fill="#2b2b2b"/>
<text transform="translate(95.8,1176.2) rotate(-90)" text-anchor="end" font-family='"Liberation Sans", sans-serif' font-size="16.2" letter-spacing="0.9" fill="#3a3a3a">200</text>
<rect x="103" y="1177.2" width="7" height="2" fill="#2b2b2b"/>
<rect x="103" y="1186.1" width="7" height="2" fill="#2b2b2b"/>
<rect x="103" y="1195.1" width="7" height="2" fill="#2b2b2b"/>
<rect x="103" y="1204.0" width="7" height="2" fill="#2b2b2b"/>
<rect x="99" y="1213.0" width="11" height="2" fill="#2b2b2b"/>
<rect x="103" y="1221.9" width="7" height="2" fill="#2b2b2b"/>
<rect x="103" y="1230.9" width="7" height="2" fill="#2b2b2b"/>
<rect x="878" y="208" width="2" height="30" fill="#ff2a1f"/>
<rect x="81" y="239" width="29" height="2" fill="#ff2a1f"/>
<rect x="110" y="238" width="2070" height="998" fill="#d7d7d7"/>
<rect x="79" y="1236" width="2125" height="1" fill="#b9b9b9"/>
<rect x="1808" y="290" width="14" height="941" fill="#979797"/>
<rect x="492" y="1216" width="1330" height="15" fill="#979797"/>
<rect x="476" y="274" width="1332" height="942" fill="#ffffff"/>
<rect x="442" y="286" width="40" height="878" fill="#ffffff"/>
<g stroke="#4a544d" stroke-width="1.6" stroke-linejoin="round">
<polygon points="813.7,600.2 827.5,600 837.5,603.75 847.5,603.75 860,606.25 870,613.75 902.5,610 917.5,616.25 927.5,631.25 945,628.75 968.75,628.75 967.5,705 973.75,712.5 975,724.7 850,721.25 850,660 832,659.2 824.2,659.2 824.2,646.1 813.7,636.9" fill="#7ec87d"/>
<polygon points="968.75,628.75 990,633.75 1015,637.5 1042.5,632.5 1055,623.75 1085,626.25 1100,602.5 1117.5,597.5 1120,595 1127.5,598.75 1140,597.5 1152.5,612.5 1151.8,624.5 1130,635 1126.25,728.8 975,724.7 973.75,712.5 967.5,705" fill="#7ec87d"/>
<polygon points="1151.8,624.5 1150.9,639 1153.6,644.4 1161.7,649 1161.7,631.7 1171.7,631.7 1174.4,637.2 1186.2,649.9 1187.2,659 1174.4,659 1183.5,666.2 1187.2,662.6 1208,661.7 1210.7,664.4 1214.4,659.9 1223.4,659 1227.1,664.4 1233.4,664.4 1234.3,655.3 1248.9,643.5 1250,643.5 1250,732.25 1180.6,730.32 1167.5,724.4 1156.3,729.64 1126.25,728.8 1130,635" fill="#f7fcf5"/>
<polygon points="1250,643.5 1265.2,638.1 1278.8,637.2 1297,635.4 1307.8,634.5 1306.25,652.5 1322.5,670 1355,672.5 1380,680 1397.5,681.25 1397.5,733.75 1348.75,735.0 1250,732.25" fill="#f7fcf5"/>
<polygon points="1165,499.6 1158.8,507 1144,510.7 1129.1,528 1132.5,542.5 1133.75,560 1152.7,599.1 1162.7,610 1165.4,616.3 1180,607.5 1225,563.75" fill="#f7fcf5"/>
<polygon points="1165,499.6 1167.4,497.2 1171.1,497.2 1176,500.9 1183.5,508.3 1190.9,507 1199.5,512 1198.3,518.1 1204.4,524.3 1213.1,523.1 1218,520.6 1226.7,526.8 1242.7,528 1253,531.3 1252.4,535.4 1246.5,538.9 1257.1,537.7 1265.4,531.9 1280.7,531.3 1265.4,537.7 1260.7,544.8 1263,547.2 1272.5,550.7 1296.1,551.9 1298.4,556.6 1310.2,556.6 1308.75,633 1297,635.4 1291.5,634.5 1294.2,627.2 1294.2,617.2 1276.1,617.2 1274.3,625.4 1263.4,627.2 1251.6,636.3 1243.4,636.3 1241.6,632.6 1232.5,632.6 1229.8,645.4 1221.6,645.4 1216.2,642.6 1208.9,642.6 1207.1,649 1198,646.3 1188.1,639 1179.9,633.6 1172.6,625.4 1165.4,616.3 1180,607.5 1225,563.75" fill="#f7fcf5"/>
<polygon points="1308.4,537.7 1307.9,529.5 1311.4,528.3 1318.5,533 1340.9,540.1 1342.1,533 1362.1,540.1 1362.1,560.2 1366.8,551.9 1371.6,552.5 1376.3,566.7 1381,549.5 1383.4,546.6 1397.5,545.4 1397.5,533 1399.9,531.3 1398.75,681.25 1387.5,681.25 1350,671.25 1322.5,668.75 1307.5,657.5 1306.25,642.5 1307.8,634.5 1310.2,556.6" fill="#f7fcf5"/>
<polygon points="1399.9,531.3 1407,534.2 1428.2,540.7 1429.4,531.3 1435.3,531.3 1436.4,549.5 1438.8,550.7 1440,535.4 1440,544.8 1450.6,546.6 1468.3,521.2 1475.4,520.6 1482.5,517 1482.5,698.75 1398.75,697.5 1398.75,681.25" fill="#f7fcf5"/>
<polygon points="1482.5,517 1505,506.25 1520,507.5 1525,513.75 1542.5,515 1552.5,523.75 1570,527.5 1582.5,522.5 1605,510 1616.25,508.75 1612.5,678.75 1582.5,700 1482.5,698.75" fill="#c9e9c2"/>
<polygon points="1482.5,698.75 1582.5,700 1612.5,678.75 1612.5,881.25 1582.5,882.5 1565,872.5 1558.75,877.5 1513.7,877.8 1472.5,876.5 1472.5,825 1481.25,815" fill="#1c4620"/>
<polygon points="1398.75,697.5 1482.5,698.75 1481.25,815 1472.5,825 1472.5,876.5 1400,878.5 1346,876.3 1348.75,735.0 1397.5,733.75" fill="#41934c"/>
<polygon points="1249,732.22 1250,732.25 1348.75,735.0 1346,876.3 1286,875.5 1245.3,871.6 1245.3,842.5 1235,827.5 1236.9,812.5 1247.2,802.2" fill="#c9e9c2"/>
<polygon points="1200.3,730.86 1249,732.22 1247.2,802.2 1236.9,812.5 1235,827.5 1245.3,842.5 1245.3,871.6 1197.5,869.7" fill="#c9e9c2"/>
<polygon points="1099,728.06 1126.25,728.8 1156.3,729.64 1167.5,724.4 1180.6,730.32 1200.3,730.86 1197.5,869.7 1151,868.8 1088.8,867.2 1088.8,835 1096.3,827.5 1115,830.3 1122.5,821.9 1118.8,801.3 1099,764.7" fill="#c9e9c2"/>
<polygon points="998.75,725.34 1099,728.06 1099,764.7 1118.8,801.3 1122.5,821.9 1115,830.3 1096.3,827.5 1088.8,835 1088.8,867.2 1029.7,865.8 1029.7,773.1" fill="#c9e9c2"/>
<polygon points="898.75,722.6 975,724.7 998.75,725.34 1029.7,773.1 1029.7,865.8 995,865.0 995,977.5 980,970 950,951.25 914.7,941.2 902,936.6 885.8,918 876.6,900.7 861.5,885.6 824.5,852.7 830.3,835.9 874.2,861.3 888.7,850.9 922.8,863.1 922.8,853.2 916.5,853.2 916.5,842.8 922.8,841.7 923.75,796.25 917.5,795 892.5,776.25 925,771.25 925,732.5 900,732.5" fill="#7ec87d"/>
<polygon points="995,865.0 1029.7,865.8 1088.8,867.2 1151,868.8 1148.75,959.5 1117.5,958.75 1115,1022.5 1110,1041.25 1090,1017.5 1065,995 1030,978.75 995,977.5" fill="#c9e9c2"/>
<polygon points="1151,868.8 1197.5,869.7 1245.3,871.6 1286,875.5 1283.75,962.3 1148.75,959.5" fill="#7ec87d"/>
<polygon points="1117.5,958.75 1148.75,959.5 1283.75,962.3 1281.25,1045 1250,1045 1190,1076.25 1170,1077.5 1137.5,1067.5 1113.75,1047.5 1110,1041.25 1115,1022.5" fill="#7ec87d"/>
<polygon points="1286,875.5 1346,876.3 1400,878.5 1398.4,1025 1356.2,1035.3 1337.5,1044.7 1300,1048.4 1283,1046.5 1283.75,962.3" fill="#7ec87d"/>
<polygon points="1400,878.5 1472.5,876.5 1513.7,877.8 1512.8,898.4 1508.1,899.4 1505.3,976.2 1488.4,998.7 1481.9,1026.9 1481.9,1045.6 1446.2,1040 1412.5,1025 1398.4,1025" fill="#41934c"/>
<polygon points="1513.7,877.8 1558.75,877.5 1565,872.5 1582.5,882.5 1612.5,881.25 1613.1,1070 1577.5,1053.1 1528.7,1045.6 1481.9,1045.6 1481.9,1026.9 1488.4,998.7 1505.3,976.2 1508.1,899.4 1512.8,898.4" fill="#7ec87d"/>
</g>
<g fill="none" stroke="#45a2d7" stroke-linejoin="round" stroke-linecap="round">
<polyline points="813.7,600.2 801.9,595.6 774.3,591.6 769,594.3 757.2,589.7 744.1,587 719.2,589.7 706,602.8 698.2,613.3 683.8,622.5 678.5,633 664.1,642.2 660.2,661.8 651,675 648.4,681.5 656.2,685.4 664.1,692 662.8,711.7 664.1,715.6 666.2,720 678,726.6 684.6,730.5 689.8,746.2 692.5,758 717.4,781.7 729.2,784.3 751.5,801.3 781.7,826.3 784.3,834.1 794.8,832.8 802.7,844.6 802.7,861.7 788.2,852.5 783,844.6 793.5,842 800,850 790,850 785,856 777.7,859.1 777.7,864.3 797.4,886.6 810.5,884 823.7,876.1" stroke-width="3.6"/>
<polyline points="662.8,711.7 648.4,728.7" stroke-width="3.6"/>
<polyline points="797.4,886.6 804.8,891.4 826.8,906.5 855.7,920.4 902,936.6 946,949.3" stroke-width="3.6"/>
<polyline points="1165.4,616.3 1152.7,599.1 1133.75,560 1132.5,542.5 1127.5,532.5 1120.5,528 1105.7,513.2 1105.7,500.9 1093.3,494.7 1090.9,487.3 1078.5,483.6 1071.1,468.8 1072.3,460.1 1079.8,456.4 1081,447.8 1077.3,444.1 1082.2,440.4 1085.9,415.7 1094.6,410.7 1097,397.2 1106.9,389.8 1121.7,384.8 1144,382.3 1148.9,384.8 1166.2,413.2 1169.9,425.6 1181,435.4 1188.4,447.8 1205.7,452.7 1215.6,463.8 1226.7,468.8 1235.3,468.8 1240.2,462.6 1244,465.1 1244,479.9 1224.2,481.1 1219.3,486 1225.4,492.2 1224.2,500.9 1215.6,508.3 1210.6,507 1211.9,488.5 1214.3,484.8 1203.2,484.8 1198.3,493.5 1192.1,492.2 1187.2,484.8 1183.5,484.8 1168.6,488.5 1167.4,497.2" stroke-width="3.6"/>
<polyline points="946,949.3 980,970 995,977.5 1030,978.75 1065,995 1090,1017.5 1110,1041.25 1113.75,1047.5 1137.5,1067.5 1170,1077.5 1190,1076.25 1250,1045 1283,1046.5 1300,1048.4 1337.5,1044.7 1356.2,1035.3 1398.4,1025 1412.5,1025 1446.2,1040 1481.9,1045.6 1528.7,1045.6 1577.5,1053.1 1613.1,1070" stroke-width="2.2"/>
<polyline points="813.75,600 827.5,600 837.5,603.75 847.5,603.75 860,606.25 870,613.75 902.5,610 917.5,616.25 927.5,631.25 945,628.75 968.75,628.75 990,633.75 1015,637.5 1042.5,632.5 1055,623.75 1085,626.25 1100,602.5 1117.5,597.5 1120,595 1127.5,598.75 1140,597.5 1152.5,612.5 1151.8,624.5 1150.9,639 1153.6,644.4 1161.7,649 1161.7,631.7 1171.7,631.7 1174.4,637.2 1186.2,649.9 1187.2,659 1174.4,659 1183.5,666.2 1187.2,662.6 1208,661.7 1210.7,664.4 1214.4,659.9 1223.4,659 1227.1,664.4 1233.4,664.4 1234.3,655.3 1248.9,643.5 1265.2,638.1 1278.8,637.2 1297,635.4 1291.5,634.5 1294.2,627.2 1294.2,617.2 1276.1,617.2 1274.3,625.4 1263.4,627.2 1251.6,636.3 1243.4,636.3 1241.6,632.6 1232.5,632.6 1229.8,645.4 1221.6,645.4 1216.2,642.6 1208.9,642.6 1207.1,649 1198,646.3 1188.1,639 1179.9,633.6 1172.6,625.4 1165.4,616.3" stroke-width="2.2"/>
<polyline points="1167.4,497.2 1171.1,497.2 1176,500.9 1183.5,508.3 1190.9,507 1199.5,512 1198.3,518.1 1204.4,524.3 1213.1,523.1 1218,520.6 1226.7,526.8 1242.7,528 1253,531.3 1252.4,535.4 1246.5,538.9 1257.1,537.7 1265.4,531.9 1280.7,531.3 1265.4,537.7 1260.7,544.8 1263,547.2 1272.5,550.7 1296.1,551.9 1298.4,556.6 1310.2,556.6 1308.4,537.7 1307.9,529.5 1311.4,528.3 1318.5,533 1340.9,540.1 1342.1,533 1362.1,540.1 1362.1,560.2 1366.8,551.9 1371.6,552.5 1376.3,566.7 1381,549.5 1383.4,546.6 1397.5,545.4 1397.5,533 1399.9,531.3 1407,534.2 1428.2,540.7 1429.4,531.3 1435.3,531.3 1436.4,549.5 1438.8,550.7 1440,535.4 1440,544.8 1450.6,546.6 1468.3,521.2 1475.4,520.6 1482.5,517 1505,506.25 1520,507.5 1525,513.75 1542.5,515 1552.5,523.75 1570,527.5 1582.5,522.5 1605,510 1616.25,508.75" stroke-width="2.2"/>
</g>
<path d="M1111.5 1046.5 L1119 1048.5 L1147 1066 L1144 1070.5 L1115 1055 Z" fill="#88c3ea" stroke="#3d97cf" stroke-width="1.8" stroke-linejoin="round"/>
<g fill="none" stroke="#45a2d7" stroke-linejoin="round" stroke-linecap="round">
<polyline points="809,886 818.7,877 824,875.5" stroke-width="5.5"/>
<path d="M1310 545 L1322 551 L1316 553 L1317 557 Z" fill="#45a2d7" stroke="#45a2d7" stroke-width="1.5"/>
<path d="M1388 547 L1388 559" stroke="#5a6a70" stroke-width="1.5"/>
</g>
<g font-family='"Liberation Sans", sans-serif' font-size="16" fill="#4a4a4a" stroke="#ffffff" stroke-width="3" stroke-opacity="0.95" paint-order="stroke" stroke-linejoin="round">
<text x="832.5" y="668" textLength="120" lengthAdjust="spacingAndGlyphs">West Point Grey</text>
<text x="1046.25" y="682" textLength="60" lengthAdjust="spacingAndGlyphs">Kitsilano</text>
<text x="1048.75" y="817.5" textLength="100" lengthAdjust="spacingAndGlyphs">Arbutus-Ridge</text>
<text x="1130" y="563.75" textLength="67.5" lengthAdjust="spacingAndGlyphs">West End</text>
<text x="1230" y="592.5" textLength="73.75" lengthAdjust="spacingAndGlyphs">Downtown</text>
<text x="1316.25" y="611.25" textLength="76.25" lengthAdjust="spacingAndGlyphs">Strathcona</text>
<text x="1363.75" y="642" textLength="152.5" lengthAdjust="spacingAndGlyphs">Grandview-Woodland</text>
<text x="1487.5" y="608.75" textLength="120" lengthAdjust="spacingAndGlyphs">Hastings-Sunrise</text>
<text x="1150" y="700" textLength="58.75" lengthAdjust="spacingAndGlyphs">Fairview</text>
<text x="1269.5" y="717.5" textLength="109.25" lengthAdjust="spacingAndGlyphs">Mount Pleasant</text>
<text x="1173.75" y="777.5" textLength="100" lengthAdjust="spacingAndGlyphs">South Cambie</text>
<text x="1292.5" y="793.75" textLength="188.75" lengthAdjust="spacingAndGlyphs">Kensington-Cedar Cottage</text>
<text x="1257.5" y="808.75" textLength="71.25" lengthAdjust="spacingAndGlyphs">Riley Park</text>
<text x="1495" y="786.25" textLength="150" lengthAdjust="spacingAndGlyphs">Renfrew-Collingwood</text>
<text x="1185" y="921.25" textLength="66.25" lengthAdjust="spacingAndGlyphs">Oakridge</text>
<text x="1358.75" y="936.25" textLength="137.5" lengthAdjust="spacingAndGlyphs">Victoria-Fraserview</text>
<text x="1317.5" y="967.5" textLength="51.25" lengthAdjust="spacingAndGlyphs">Sunset</text>
<text x="1526.25" y="997.5" textLength="62.5" lengthAdjust="spacingAndGlyphs">Killarney</text>
<text x="1168.75" y="1023.75" textLength="58.75" lengthAdjust="spacingAndGlyphs">Marpole</text>
<text x="1100" y="858.4" textLength="96.6" lengthAdjust="spacingAndGlyphs">Shaughnessy</text>
<text x="837.5" y="897.5" textLength="136.25" lengthAdjust="spacingAndGlyphs">Dunbar-Southlands</text>
<text x="1036.25" y="938.75" textLength="71.25" lengthAdjust="spacingAndGlyphs">Kerrisdale</text>
</g>
<text x="922.7" y="355.1" font-family='"Liberation Sans", sans-serif' font-size="39" fill="#1e4d12" stroke="#1e4d12" stroke-width="0.45" textLength="432" lengthAdjust="spacingAndGlyphs">Vancouver's Douglas Firs</text>
<path d="M1594.1 428.4 L1614.7 476.5 L1594.3 457.4 L1575.1 477.4 Z" fill="#000"/>
<text x="552.4" y="947.9" font-family='"Liberation Sans", sans-serif' font-size="17.8" fill="#111" textLength="187" lengthAdjust="spacingAndGlyphs">Number of Douglas Firs</text>
<rect x="551.7" y="959.1" width="31.7" height="18.2" fill="#f7fcf5" stroke="#333" stroke-width="1.2"/>
<text x="592.7" y="974.6" font-family='"Liberation Sans", sans-serif' font-size="17.8" fill="#111" textLength="37.6" lengthAdjust="spacingAndGlyphs">0 - 6</text>
<rect x="551.7" y="988.2" width="31.7" height="18.2" fill="#c9e9c2" stroke="#333" stroke-width="1.2"/>
<text x="592.7" y="1003.7" font-family='"Liberation Sans", sans-serif' font-size="17.8" fill="#111" textLength="49.3" lengthAdjust="spacingAndGlyphs">6 - 26</text>
<rect x="551.7" y="1017.4" width="31.7" height="18.2" fill="#7ec87d" stroke="#333" stroke-width="1.2"/>
<text x="592.7" y="1032.9" font-family='"Liberation Sans", sans-serif' font-size="17.8" fill="#111" textLength="60.9" lengthAdjust="spacingAndGlyphs">26 - 39</text>
<rect x="551.7" y="1046.5" width="31.7" height="18.2" fill="#41934c" stroke="#333" stroke-width="1.2"/>
<text x="592.7" y="1062" font-family='"Liberation Sans", sans-serif' font-size="17.8" fill="#111" textLength="60.4" lengthAdjust="spacingAndGlyphs">39 - 52</text>
<rect x="551.7" y="1075.5" width="31.7" height="18.2" fill="#1c4620" stroke="#333" stroke-width="1.2"/>
<text x="592.7" y="1091" font-family='"Liberation Sans", sans-serif' font-size="17.8" fill="#111" textLength="58.4" lengthAdjust="spacingAndGlyphs">52 - 78</text>
<rect x="549.6" y="1111.6" width="36.3" height="4.2" fill="#45a2d7"/>
<text x="592.7" y="1119.5" font-family='"Liberation Sans", sans-serif' font-size="17.8" fill="#111" textLength="165" lengthAdjust="spacingAndGlyphs">Vancouver Shoreline</text>
<rect x="1365.7" y="1120.9" width="219.3" height="14" fill="#fff" stroke="#000" stroke-width="1.3"/>
<rect x="1365.7" y="1120.9" width="109.7" height="14" fill="#000"/>
<g font-family='"Liberation Sans", sans-serif' font-size="17.8" fill="#111"><text x="1360.5" y="1107.9">0</text><text x="1470.2" y="1107.9">2</text><text x="1579.6" y="1107.9" textLength="41.4" lengthAdjust="spacingAndGlyphs">4 km</text></g>
<defs><linearGradient id="sbg" x1="0" y1="0" x2="1" y2="0"><stop offset="0" stop-color="#f4f4f4"/><stop offset="1" stop-color="#fdfdfd"/></linearGradient></defs>
<rect x="2180" y="238" width="24" height="998" fill="url(#sbg)"/>
<rect x="2180" y="238" width="1" height="998" fill="#c9c9c9"/>
<path d="M2186 256 L2199 256 L2192.5 248 Z" fill="#555"/>
<rect x="2181" y="264" width="23" height="2" fill="#c8c8c8"/>
<rect x="2181" y="266" width="23" height="24" fill="#e3e3e3"/>
<rect x="2181" y="290" width="23" height="2" fill="#c8c8c8"/>
<rect x="2181" y="1165" width="23" height="2" fill="#c8c8c8"/>
<rect x="2181" y="1167" width="23" height="40" fill="#e3e3e3"/>
<rect x="2181" y="1207" width="23" height="2" fill="#c8c8c8"/>
<path d="M2186 1218 L2199 1218 L2192.5 1226 Z" fill="#555"/>
<rect x="0" y="1237" width="2204" height="59" fill="#ececec"/>
<text x="1057" y="1278" font-family='"Liberation Sans", sans-serif' font-size="26.5" fill="#111" textLength="110" lengthAdjust="spacingAndGlyphs">x: 90 mm</text>
<text x="1269" y="1278" font-family='"Liberation Sans", sans-serif' font-size="26.5" fill="#111" textLength="95" lengthAdjust="spacingAndGlyphs">y: 0 mm</text>
<text x="1481" y="1278" font-family='"Liberation Sans", sans-serif' font-size="26.5" fill="#111" textLength="86" lengthAdjust="spacingAndGlyphs">page: 1</text>
<defs><linearGradient id="cbg" x1="0" y1="0" x2="0" y2="1"><stop offset="0" stop-color="#ffffff"/><stop offset="1" stop-color="#f0f0f0"/></linearGradient></defs>
<rect x="1693" y="1245.5" width="254" height="45" rx="4" fill="#fff" stroke="#a9a9a9" stroke-width="2"/>
<rect x="1907" y="1247" width="39" height="42" fill="url(#cbg)"/>
<rect x="1906" y="1247" width="1" height="42" fill="#c8c8c8"/>
<path d="M1918 1264 L1934 1264 L1926 1273 Z" fill="#555"/>
<text x="1700" y="1277" font-family='"Liberation Sans", sans-serif' font-size="26.5" fill="#111" textLength="79" lengthAdjust="spacingAndGlyphs">79.0%</text>
<rect x="1963" y="1262" width="193" height="10" rx="5" fill="#dedede" stroke="#a5a5a5" stroke-width="1.5"/>
<rect x="1963" y="1262" width="14" height="10" rx="4" fill="#5b9ef0" stroke="#2e6fcc" stroke-width="1.5"/>
<rect x="1975" y="1255" width="24" height="25" rx="4" fill="#fbfbfb" stroke="#a0a0a0" stroke-width="1.5"/>
<rect x="2202" y="1272" width="2" height="2" fill="#a9a9a9"/>
<rect x="2196" y="1278" width="2" height="2" fill="#a9a9a9"/>
<rect x="2202" y="1278" width="2" height="2" fill="#a9a9a9"/>
<rect x="2190" y="1284" width="2" height="2" fill="#a9a9a9"/>
<rect x="2196" y="1284" width="2" height="2" fill="#a9a9a9"/>
<rect x="2202" y="1284" width="2" height="2" fill="#a9a9a9"/>
<rect x="2184" y="1290" width="2" height="2" fill="#a9a9a9"/>
<rect x="2190" y="1290" width="2" height="2" fill="#a9a9a9"/>
<rect x="2196" y="1290" width="2" height="2" fill="#a9a9a9"/>
<path d="M0 0 L8.5 0 Q1 6 0 18.5 Z" fill="#d4d4d4"/><path d="M8.5 0 Q1 6 0 18.5" fill="none" stroke="#9c9c9c" stroke-width="1.2"/>
<path d="M0 1296 L0 1272 Q2 1292 24 1296 Z" fill="#d4d4d4"/><path d="M0 1272 Q2 1292 24 1296" fill="none" stroke="#9c9c9c" stroke-width="1.2"/>
<path d="M2204 1296 L2204 1288 Q2199 1294 2190 1296 Z" fill="#d4d4d4"/><path d="M2204 1288 Q2199 1294 2190 1296" fill="none" stroke="#9c9c9c" stroke-width="1.2"/>
<path d="M2204 0 L2200 0 Q2203 2 2204 4 Z" fill="#c8c8c8"/>
<g transform="translate(38,68)"><rect x="0.9" y="0.9" width="38.2" height="40.2" rx="4.5" fill="#6c9bcd" stroke="#3e5f84" stroke-width="1.8"/><rect x="6" y="2" width="28.2" height="17.7" rx="1.2" fill="#ececec" stroke="#666" stroke-width="1.3"/><rect x="9.5" y="6" width="21.5" height="1.9" fill="#555"/><rect x="9.5" y="10" width="21.5" height="1.9" fill="#555"/><rect x="9.5" y="14" width="21.5" height="1.9" fill="#555"/><rect x="8" y="26.5" width="24.5" height="14.5" fill="#ebebeb" stroke="#666" stroke-width="1.3"/><rect x="11" y="30" width="6" height="7.4" fill="#3e5f84"/></g>
<path d="M116.5 70.5 L148.5 70.5 L159.5 81.5 L159.5 109.5 L116.5 109.5 Z" fill="#fff" stroke="#6e6e6e" stroke-width="1.9" stroke-linejoin="miter"/><path d="M148.5 70.5 L148.5 81.5 L159.5 81.5" fill="none" stroke="#6e6e6e" stroke-width="1.9"/>
<rect x="130" y="74.5" width="25.2" height="31" fill="none" stroke="#bcd0f5" stroke-width="1.6"/>
<path d="M120.5 72.3 L139.8 72.3 L139.8 84 L129.8 84 L129.8 111.7 L120.5 111.7 Z" fill="#fbe07d" stroke="#d7ab35" stroke-width="1.5"/><path d="M121.5 73.5 L129 80.5" stroke="#d7ab35" stroke-width="1"/>
<rect x="121" y="82.0" width="4.8" height="1.5" fill="#b58b26"/>
<rect x="121" y="86.1" width="4.8" height="1.5" fill="#b58b26"/>
<rect x="121" y="90.2" width="4.8" height="1.5" fill="#b58b26"/>
<rect x="121" y="94.3" width="4.8" height="1.5" fill="#b58b26"/>
<rect x="121" y="98.3" width="4.8" height="1.5" fill="#b58b26"/>
<rect x="121" y="101.89999999999999" width="4.8" height="1.5" fill="#b58b26"/>
<g transform="translate(140.3,92.2)"><rect x="0" y="0" width="21.3" height="21.3" rx="5" fill="url(#gold)" stroke="#b59030" stroke-width="1"/><rect x="9.55" y="3.1500000000000004" width="2.2" height="15" fill="#fff" transform="rotate(0 10.65 10.65)"/><rect x="9.55" y="3.1500000000000004" width="2.2" height="15" fill="#fff" transform="rotate(60 10.65 10.65)"/><rect x="9.55" y="3.1500000000000004" width="2.2" height="15" fill="#fff" transform="rotate(120 10.65 10.65)"/><circle cx="10.65" cy="10.65" r="4.2" fill="#fff"/><circle cx="10.65" cy="10.65" r="2" fill="#c9a43a"/></g>
<rect x="180.8" y="71" width="27" height="38.3" fill="#cdcdcd" stroke="#6e6e6e" stroke-width="1.9"/>
<path d="M186.5 66.5 L217.0 66.5 L227.5 77.0 L227.5 103.2 L186.5 103.2 Z" fill="#fff" stroke="#6e6e6e" stroke-width="1.9" stroke-linejoin="miter"/><path d="M217.0 66.5 L217.0 77.0 L227.5 77.0" fill="none" stroke="#6e6e6e" stroke-width="1.9"/>
<rect x="190" y="70.5" width="33" height="28.5" fill="none" stroke="#bcd0f5" stroke-width="1.6"/>
<g transform="translate(206.5,92.2)"><rect x="0" y="0" width="21.3" height="21.3" rx="5" fill="url(#gold)" stroke="#b59030" stroke-width="1"/><rect x="9.55" y="3.1500000000000004" width="2.2" height="15" fill="#fff" transform="rotate(0 10.65 10.65)"/><rect x="9.55" y="3.1500000000000004" width="2.2" height="15" fill="#fff" transform="rotate(60 10.65 10.65)"/><rect x="9.55" y="3.1500000000000004" width="2.2" height="15" fill="#fff" transform="rotate(120 10.65 10.65)"/><circle cx="10.65" cy="10.65" r="4.2" fill="#fff"/><circle cx="10.65" cy="10.65" r="2" fill="#c9a43a"/></g>
<path d="M248.5 70.5 L283.5 70.5 L292.5 79.5 L292.5 110.5 L248.5 110.5 Z" fill="#fff" stroke="#777" stroke-width="1.6" stroke-linejoin="miter"/><path d="M283.5 70.5 L283.5 79.5 L292.5 79.5" fill="none" stroke="#777" stroke-width="1.6"/>
<rect x="252.5" y="74.5" width="36" height="32" fill="none" stroke="#b8cdf0" stroke-width="1.4"/>
<path d="M278.03 94.92 L289.50 108.50" stroke="#222" stroke-width="8" stroke-linecap="round"/><path d="M278.03 94.92 L289.50 108.50" stroke="#e8cf6e" stroke-width="5" stroke-linecap="round"/><path d="M281.70 95.90 L278.80 99.20" stroke="#333" stroke-width="1.6"/><circle cx="288.90" cy="107.90" r="1.7" fill="#f4f4f4" stroke="#333" stroke-width="0.9"/><path d="M267.27 79.19 A8.3 8.3 0 1 1 263.17 83.84 L268.35 88.40 A3.1 3.1 0 0 0 272.45 83.74 Z" fill="#eef0ee" stroke="#222" stroke-width="1.5" stroke-linejoin="round"/>
<path d="M314 92 L314 71.5 L327 71.5 L330 75 L350 75 L350 80 L358 80 L351 106 L314 106 Z" fill="#f6d555" stroke="#c9a73a" stroke-width="1.4"/>
<path d="M314 106 L320 81 L358 81 L351 106 Z" fill="#fbde5c" stroke="#c9a73a" stroke-width="1.4"/>
<g transform="translate(382,68)"><rect x="0.9" y="0.9" width="38.2" height="40.2" rx="4.5" fill="#6c9bcd" stroke="#3e5f84" stroke-width="1.8"/><rect x="6" y="2" width="28.2" height="17.7" rx="1.2" fill="#ececec" stroke="#666" stroke-width="1.3"/><rect x="9.5" y="6" width="21.5" height="1.9" fill="#555"/><rect x="9.5" y="10" width="21.5" height="1.9" fill="#555"/><rect x="9.5" y="14" width="21.5" height="1.9" fill="#555"/><rect x="8" y="26.5" width="24.5" height="14.5" fill="#ebebeb" stroke="#666" stroke-width="1.3"/><rect x="11" y="30" width="6" height="7.4" fill="#3e5f84"/></g>
<g transform="translate(405,94)"><rect x="0" y="0" width="21" height="20" rx="5" fill="#5a9a5e" stroke="#3f7a44" stroke-width="1"/><path d="M5 15 L16 5" stroke="#fff" stroke-width="3.4" stroke-linecap="round"/></g>
<path d="M466.5 68 L488.5 68 L497.5 77 L497.5 111 L466.5 111 Z" fill="#fff" stroke="#777" stroke-width="1.6" stroke-linejoin="miter"/><path d="M488.5 68 L488.5 77 L497.5 77" fill="none" stroke="#777" stroke-width="1.6"/>
<g transform="translate(484,92)"><rect x="0" y="0" width="22" height="22" rx="5" fill="url(#gold)" stroke="#b59030" stroke-width="1"/><rect x="9.9" y="3.5" width="2.2" height="15" fill="#fff" transform="rotate(0 11.0 11.0)"/><rect x="9.9" y="3.5" width="2.2" height="15" fill="#fff" transform="rotate(60 11.0 11.0)"/><rect x="9.9" y="3.5" width="2.2" height="15" fill="#fff" transform="rotate(120 11.0 11.0)"/><circle cx="11.0" cy="11.0" r="4.2" fill="#fff"/><circle cx="11.0" cy="11.0" r="2" fill="#c9a43a"/></g>
<g transform="translate(542,70)"><rect x="10" y="0.8" width="20" height="12" fill="#f4f4f4" stroke="#666" stroke-width="1.4"/><rect x="0.8" y="9" width="38.4" height="20" rx="5" fill="#6c9ccf" stroke="#3e5f84" stroke-width="1.6"/><rect x="9" y="21" width="22" height="18" fill="#f2f2f2" stroke="#666" stroke-width="1.4"/><rect x="13" y="26" width="14" height="1.6" fill="#666"/><rect x="13" y="30" width="14" height="1.6" fill="#666"/><rect x="13" y="34" width="14" height="1.6" fill="#666"/></g>
<rect x="596.5" y="62" width="62" height="59" rx="4" fill="#fbfbfb" stroke="#bdbdbd" stroke-width="1.4"/><path d="M598 121 L657 121" stroke="#a8a8a8" stroke-width="1.2"/>
<path d="M607 67 L628 67 L637 76 L637 109 L607 109 Z" fill="#fff" stroke="#777" stroke-width="1.6" stroke-linejoin="miter"/><path d="M628 67 L628 76 L637 76" fill="none" stroke="#777" stroke-width="1.6"/>
<rect x="608.4" y="81" width="26.5" height="20" fill="#4ba9ee" stroke="#46627e" stroke-width="1.7"/>
<path d="M609.3 91.2 L616.7 86 L634 92.1 L634 100.2 L609.3 100.2 Z" fill="url(#hill)"/>
<g transform="translate(630,92)"><rect x="0.5" y="0.5" width="21.5" height="21" rx="4" fill="url(#ebadge)" stroke="#2f475c" stroke-width="1"/><path d="M11.2 5.8 L6.8 5.8 Q5.4 5.8 5.4 7.2 L5.4 14.6 Q5.4 16 6.8 16 L11.2 16" fill="none" stroke="#ffffff" stroke-width="3.3"/><path d="M9.8 10.9 L18.2 10.9 M14.6 7 L18.4 10.9 L14.6 14.8" fill="none" stroke="#ffffff" stroke-width="1.9"/></g>
<rect x="593.4" y="58.9" width="68" height="68" fill="none" stroke="#e8412a" stroke-width="4.8"/>
<path d="M538.5 16.3 L579 44.3" stroke="#e8412a" stroke-width="4.6" stroke-linecap="butt"/>
<path d="M594.3 58.3 L569.4 54.4 L583.9 35.6 Z" fill="#e8412a" stroke="#e8412a" stroke-width="0.8" stroke-linejoin="miter"/>
<path d="M672.5 67 L694.5 67 L703.5 76 L703.5 109 L672.5 109 Z" fill="#fff" stroke="#888" stroke-width="1.6" stroke-linejoin="miter"/><path d="M694.5 67 L694.5 76 L703.5 76" fill="none" stroke="#888" stroke-width="1.6"/>
<path d="M687.6 90.2 L687.60 81.00" stroke="#fb9a2a" stroke-width="2.2"/><circle cx="687.60" cy="81.00" r="2.5" fill="#fb9a2a"/><path d="M687.6 90.2 L687.60 99.40" stroke="#fb9a2a" stroke-width="2.2"/><circle cx="687.60" cy="99.40" r="2.5" fill="#fb9a2a"/><path d="M687.6 90.2 L695.57 85.60" stroke="#fb9a2a" stroke-width="2.2"/><circle cx="695.57" cy="85.60" r="2.5" fill="#fb9a2a"/><path d="M687.6 90.2 L679.63 85.60" stroke="#fb9a2a" stroke-width="2.2"/><circle cx="679.63" cy="85.60" r="2.5" fill="#fb9a2a"/><path d="M687.6 90.2 L679.63 94.80" stroke="#fb9a2a" stroke-width="2.2"/><circle cx="679.63" cy="94.80" r="2.5" fill="#fb9a2a"/><path d="M687.6 90.2 L695.57 94.80" stroke="#fb9a2a" stroke-width="2.2"/><circle cx="695.57" cy="94.80" r="2.5" fill="#fb9a2a"/><circle cx="687.6" cy="90.2" r="2.4" fill="#fb9a2a"/>
<g transform="translate(696,92)"><rect x="0.5" y="0.5" width="21.5" height="21" rx="4" fill="url(#ebadge)" stroke="#2f475c" stroke-width="1"/><path d="M11.2 5.8 L6.8 5.8 Q5.4 5.8 5.4 7.2 L5.4 14.6 Q5.4 16 6.8 16 L11.2 16" fill="none" stroke="#ffffff" stroke-width="3.3"/><path d="M9.8 10.9 L18.2 10.9 M14.6 7 L18.4 10.9 L14.6 14.8" fill="none" stroke="#ffffff" stroke-width="1.9"/></g>
<path d="M738.5 67 L760.5 67 L769.5 76 L769.5 109 L738.5 109 Z" fill="#fff" stroke="#888" stroke-width="1.6" stroke-linejoin="miter"/><path d="M760.5 67 L760.5 76 L769.5 76" fill="none" stroke="#888" stroke-width="1.6"/>
<path d="M742 100 C748 92 752 84 752 76 C752 72 749 73 750 78 C751 86 758 94 766 93 C762 90 750 92 742 100 Z" fill="none" stroke="#e22c25" stroke-width="1.6"/>
<g transform="translate(762,92)"><rect x="0.5" y="0.5" width="21.5" height="21" rx="4" fill="url(#ebadge)" stroke="#2f475c" stroke-width="1"/><path d="M11.2 5.8 L6.8 5.8 Q5.4 5.8 5.4 7.2 L5.4 14.6 Q5.4 16 6.8 16 L11.2 16" fill="none" stroke="#ffffff" stroke-width="3.3"/><path d="M9.8 10.9 L18.2 10.9 M14.6 7 L18.4 10.9 L14.6 14.8" fill="none" stroke="#ffffff" stroke-width="1.9"/></g>
<path d="M808 92 L820 73 L820 84 C834 84 845 88 843 98 C842 105 834 108 828 107 C836 104 838 97 831 95 C828 94 824 94 820 95 L820 106 Z" fill="#f08a2e" stroke="#c5661c" stroke-width="1.4" stroke-linejoin="round"/>
<path d="M909 91 L897 73 L897 84 C883 84 873 88 875 98 C876 105 884 108 890 107 C882 104 880 97 887 95 C890 94 893 94 897 95 L897 106 Z" fill="#d9dbdb" stroke="#c4c6c6" stroke-width="1.4" stroke-linejoin="round"/>
<rect x="967" y="72.5" width="46" height="34" rx="7" fill="#e4e6e8" stroke="#c9cbcd" stroke-width="1.6"/>
<g fill="#b9bdc1"><path d="M973 80 L984 79 L986 86 L980 90 L982 98 L977 98 L974 88 Z"/><path d="M989 79 L1000 78 L1008 82 L1003 90 L996 88 L992 93 L995 101 L990 101 L987 90 Z"/></g>
<g stroke="#f3f3f3" stroke-width="1.4"><path d="M967 86 L1013 86 M967 95 L1013 95 M983 72 L983 107 M997 72 L997 107"/></g>
<rect x="1036.5" y="69.5" width="4.5" height="41" rx="1" fill="#d3d6d8" stroke="#c4c7c9" stroke-width="1"/>
<path d="M1042 90 L1061 70.5 L1061 82.5 L1075 82.5 L1075 97.5 L1061 97.5 L1061 110 Z" fill="#d5d8da" stroke="#c3c6c8" stroke-width="1.2"/>
<path d="M1105.5 90 L1124 70.5 L1124 82.5 L1138.5 82.5 L1138.5 97.5 L1124 97.5 L1124 110 Z" fill="#d5d8da" stroke="#c3c6c8" stroke-width="1.2"/>
<rect x="1157.5" y="60.5" width="165" height="58.5" rx="5" fill="#fff" stroke="#b5b5b5" stroke-width="1.6"/>
<defs><linearGradient id="dd" x1="0" y1="0" x2="0" y2="1"><stop offset="0" stop-color="#fafafa"/><stop offset="1" stop-color="#ececec"/></linearGradient></defs>
<path d="M1282 61.5 L1317.5 61.5 Q1321.5 61.5 1321.5 65.5 L1321.5 114 Q1321.5 118 1317.5 118 L1282 118 Z" fill="url(#dd)"/>
<rect x="1281.5" y="61" width="1.2" height="57.5" fill="#a8a8a8"/>
<rect x="1158.5" y="61" width="124" height="2" fill="#9e9e9e" opacity="0.8"/>
<path d="M1293 86 L1309 86 L1301 94 Z" fill="#b3b3b3"/>
<text x="1165" y="99" font-family='"Liberation Sans", sans-serif' font-size="26" fill="#b0b0b0">1</text>
<path d="M1375 90 L1356.5 70.5 L1356.5 82.5 L1341.5 82.5 L1341.5 97.5 L1356.5 97.5 L1356.5 110 Z" fill="#d5d8da" stroke="#c3c6c8" stroke-width="1.2"/>
<path d="M1438 90 L1419 70.5 L1419 82.5 L1404.5 82.5 L1404.5 97.5 L1419 97.5 L1419 110 Z" fill="#d5d8da" stroke="#c3c6c8" stroke-width="1.2"/>
<rect x="1439" y="69.5" width="4.5" height="41" rx="1" fill="#d3d6d8" stroke="#c4c7c9" stroke-width="1"/>
<g transform="translate(1470,70)"><rect x="10" y="0.8" width="20" height="12" fill="#f4f4f4" stroke="#c8c8c8" stroke-width="1.4"/><rect x="0.8" y="9" width="38.4" height="20" rx="5" fill="#d2d2d2" stroke="#bdbdbd" stroke-width="1.6"/><rect x="9" y="21" width="22" height="18" fill="#f2f2f2" stroke="#c8c8c8" stroke-width="1.4"/><rect x="13" y="26" width="14" height="1.6" fill="#c8c8c8"/><rect x="13" y="30" width="14" height="1.6" fill="#c8c8c8"/><rect x="13" y="34" width="14" height="1.6" fill="#c8c8c8"/></g>
<path d="M1534.5 66.5 L1556.5 66.5 L1565.5 75.5 L1565.5 108.5 L1534.5 108.5 Z" fill="#fff" stroke="#d4d4d4" stroke-width="1.6" stroke-linejoin="miter"/><path d="M1556.5 66.5 L1556.5 75.5 L1565.5 75.5" fill="none" stroke="#d4d4d4" stroke-width="1.6"/>
<rect x="1536" y="81" width="28" height="20" fill="url(#gpic)" stroke="#d0d0d0" stroke-width="1.2"/>
<g transform="translate(1558,92)"><rect x="0.5" y="0.5" width="21.5" height="21" rx="4" fill="#c4c4c4" stroke="#b8b8b8" stroke-width="1"/><path d="M11.2 5.8 L6.8 5.8 Q5.4 5.8 5.4 7.2 L5.4 14.6 Q5.4 16 6.8 16 L11.2 16" fill="none" stroke="#f2f2f2" stroke-width="3.3"/><path d="M9.8 10.9 L18.2 10.9 M14.6 7 L18.4 10.9 L14.6 14.8" fill="none" stroke="#f2f2f2" stroke-width="1.9"/></g>
<path d="M1592 87 L1608 87 L1600 95 Z" fill="#505050"/>
<rect x="1622.5" y="68.5" width="39.5" height="31.5" rx="6" fill="#b5cdea" stroke="#7d9fcb" stroke-width="1.6"/>
<g fill="#4a6f9a"><path d="M1627 74 L1636 73 L1637 80 L1632 84 L1633 92 L1629 92 L1627 83 Z"/><path d="M1640 73 L1650 73 L1657 77 L1653 84 L1647 82 L1644 87 L1646 94 L1642 94 L1639 84 Z"/></g>
<g stroke="#e8f0fa" stroke-width="1.3"><path d="M1622 81 L1662 81 M1622 90 L1662 90 M1636 68 L1636 100 M1650 68 L1650 100"/></g>
<path d="M1652.98 93.14 L1666.00 110.50" stroke="#222" stroke-width="8" stroke-linecap="round"/><path d="M1652.98 93.14 L1666.00 110.50" stroke="#e8cf6e" stroke-width="5" stroke-linecap="round"/><path d="M1656.95 94.85 L1654.05 98.15" stroke="#333" stroke-width="1.6"/><circle cx="1665.40" cy="109.90" r="1.7" fill="#f4f4f4" stroke="#333" stroke-width="0.9"/><path d="M1641.27 75.09 A8.3 8.3 0 1 1 1637.17 79.74 L1642.35 84.30 A3.1 3.1 0 0 0 1646.45 79.64 Z" fill="#eef0ee" stroke="#222" stroke-width="1.5" stroke-linejoin="round"/>
<path d="M50.5 175.3 L36 189.8" stroke="#333" stroke-width="7.5" stroke-linecap="butt"/><path d="M47 178.8 L37.5 188.3" stroke="#f0c844" stroke-width="3.5"/><circle cx="50.2" cy="175.60000000000002" r="2" fill="#000"/><circle cx="63" cy="162.8" r="16.5" fill="url(#glass)" stroke="#666" stroke-width="1.8"/>
<rect x="51.5" y="160.5" width="23" height="4.6" rx="2.3" fill="#6a9bd0" stroke="#4a78ad" stroke-width="0.8"/><rect x="60.7" y="151.5" width="4.6" height="23" rx="2.3" fill="#6a9bd0" stroke="#4a78ad" stroke-width="0.8"/><rect x="52.3" y="161.3" width="21.4" height="3" fill="#6a9bd0"/>
<path d="M116.5 175.3 L102 189.8" stroke="#333" stroke-width="7.5" stroke-linecap="butt"/><path d="M113 178.8 L103.5 188.3" stroke="#f0c844" stroke-width="3.5"/><circle cx="116.2" cy="175.60000000000002" r="2" fill="#000"/><circle cx="129" cy="162.8" r="16.5" fill="url(#glass)" stroke="#666" stroke-width="1.8"/>
<rect x="118" y="160.5" width="22" height="4.6" rx="2.3" fill="#6a9bd0" stroke="#4a78ad" stroke-width="0.8"/>
<rect x="170.5" y="148.5" width="22" height="27" fill="#e8e8e8" stroke="#999" stroke-width="1.4"/>
<path d="M182.5 175.3 L168 189.8" stroke="#333" stroke-width="7.5" stroke-linecap="butt"/><path d="M179 178.8 L169.5 188.3" stroke="#f0c844" stroke-width="3.5"/><circle cx="182.2" cy="175.60000000000002" r="2" fill="#000"/><circle cx="195" cy="162.8" r="16.5" fill="url(#glass)" stroke="#666" stroke-width="1.8"/>
<text x="195" y="169.5" text-anchor="middle" font-family='"Liberation Sans", sans-serif' font-weight="700" font-size="17" fill="#222" textLength="23" lengthAdjust="spacingAndGlyphs">1:1</text>
<path d="M248.5 175.5 L234 190" stroke="#333" stroke-width="7.5" stroke-linecap="butt"/><path d="M245 179 L235.5 188.5" stroke="#f0c844" stroke-width="3.5"/><circle cx="248.2" cy="175.8" r="2" fill="#000"/><circle cx="261" cy="163" r="16.5" fill="url(#glass)" stroke="#666" stroke-width="1.8"/>
<g fill="#6a9bd0" stroke="#34577c" stroke-width="1.7" stroke-linejoin="miter"><path d="M239.5 144.5 L256 144.5 L251 149.5 L256 154.5 L250.5 160 L245.5 155 L239.5 161 Z"/><path d="M280 144.5 L263.5 144.5 L268.5 149.5 L263.5 154.5 L269 160 L274 155 L280 161 Z"/><path d="M280 184.5 L263.5 184.5 L268.5 179.5 L263.5 174.5 L269 169 L274 174 L280 168 Z"/></g>
<path d="M302.1 166 C300.5 150 318 141 336.5 152.5 L341.8 147.4 L341.8 166.9 L324.8 166.9 L331.5 160.5 C321 152.5 309 153.5 307.5 163.5 Z" fill="url(#refr)" stroke="#2a63a8" stroke-width="1"/>
<path d="M341.9 170.2 C343.5 186.2 326 195.2 307.5 183.7 L302.2 188.8 L302.2 169.3 L319.2 169.3 L312.5 175.7 C323 183.7 335 182.7 336.5 172.7 Z" fill="url(#refr2)" stroke="#2a63a8" stroke-width="1"/>
<rect x="401.3" y="151.3" width="23.6" height="21.5" fill="#c8e5f7" stroke="#45698a" stroke-width="2"/>
<path d="M418.3 171 L418.3 163.5 C418.3 149.5 436.5 149.5 436.5 163.5 L436.5 171" fill="none" stroke="#8c8c8c" stroke-width="4.6"/>
<path d="M418.3 171 L418.3 163.5 C418.3 149.5 436.5 149.5 436.5 163.5 L436.5 171" fill="none" stroke="#f0f0ee" stroke-width="2"/>
<rect x="413.4" y="171" width="27.2" height="17.6" rx="2.5" fill="#f2d94a" stroke="#c9a02a" stroke-width="2"/>
<rect x="467.4" y="157.2" width="23" height="21.3" fill="#c8e5f7" stroke="#45698a" stroke-width="2"/>
<ellipse cx="490.8" cy="159.5" rx="12" ry="11.4" fill="#c8e5f7" stroke="#45698a" stroke-width="1.9"/>
<path d="M486.5 162.5 C490 153 502 153 503.5 162 C504.5 165 504 168 503 171" fill="none" stroke="#8c8c8c" stroke-width="4.6"/>
<path d="M486.5 162.5 C490 153 502 153 503.5 162 C504.5 165 504 168 503 171" fill="none" stroke="#f0f0ee" stroke-width="2"/>
<rect x="479.5" y="171" width="27.2" height="17.6" rx="2.5" fill="#f2d94a" stroke="#c9a02a" stroke-width="2"/>
<rect x="536.5" y="164.5" width="25" height="19" fill="#cde6f7" stroke="#4f6e8e" stroke-width="1.6"/>
<circle cx="557.4" cy="162.6" r="12.1" fill="#cde6f7" stroke="#4f6e8e" stroke-width="1.6"/>
<rect x="532" y="148" width="3.5" height="3.5" fill="#000"/>
<rect x="568" y="148" width="3.5" height="3.5" fill="#000"/>
<rect x="532" y="185" width="3.5" height="3.5" fill="#000"/>
<rect x="568" y="185" width="3.5" height="3.5" fill="#000"/>
<rect x="603.5" y="165.5" width="23.5" height="17.5" fill="#ece79c" stroke="#a5a5a5" stroke-width="1.8"/>
<circle cx="622" cy="162.3" r="11.6" fill="#c5def2" stroke="#4f6e8e" stroke-width="1.6"/>
<rect x="608" y="148.5" width="3.6" height="3.6" fill="#000"/>
<rect x="598.2" y="160.5" width="3.6" height="3.6" fill="#000"/>
<rect x="608" y="174.5" width="3.6" height="3.6" fill="#000"/>
<rect x="598.2" y="184.2" width="3.6" height="3.6" fill="#000"/>
<rect x="628.2" y="184.2" width="3.6" height="3.6" fill="#000"/>
<rect x="665" y="170" width="31" height="17" fill="#b9d3e8" stroke="#7397b8" stroke-width="1.6"/>
<path d="M700.5 186.6 L711.5 186.6 L706 192.6 Z" fill="#555"/>
<rect x="730" y="165" width="2" height="25" fill="#333"/>
<rect x="732.4" y="170" width="27.5" height="17" fill="#b9d3e8" stroke="#7397b8" stroke-width="1.6"/>
<path d="M766 186.6 L777 186.6 L771.5 192.6 Z" fill="#555"/>
<rect x="795" y="162" width="9" height="17" fill="#c9f5c3" stroke="#7dbf7a" stroke-width="1.5"/>
<rect x="811.8" y="148" width="2" height="15.6" fill="#333"/>
<rect x="812.8" y="159" width="12.2" height="28" fill="#c0dcf0" stroke="#7397b8" stroke-width="1.6"/>
<rect x="830.2" y="148" width="2" height="15.6" fill="#333"/>
<rect x="831" y="159" width="8" height="16" fill="#c9f5c3" stroke="#7dbf7a" stroke-width="1.6"/>
<path d="M832 187 L843.5 187 L837.7 192.8 Z" fill="#555"/>
<rect x="863" y="148.8" width="22.2" height="38.2" fill="#c8e4f7" stroke="#7397b8" stroke-width="1.6"/>
<path d="M862.5 167.8 L871.5 167.8 M865.8 162.3 L871.5 167.8 L865.8 173.3 M885.5 167.8 L876.5 167.8 M882.2 162.3 L876.5 167.8 L882.2 173.3" fill="none" stroke="#444" stroke-width="1.8"/>
<rect x="891" y="148.8" width="10" height="38.2" fill="#f1ef9f" stroke="#9a9a9a" stroke-width="1.6"/>
<path d="M898 187 L909.6 187 L903.8 192.8 Z" fill="#555"/>
<path d="M30 262 C27 258 24 258 24 262 C26 268 31 276 36 284 L54 285 C58 278 59 270 58 264 L58 252 C58 249 54 249 54 252 L53 262 L52 247 C52 243 48 243 48 247 L47 260 L46 244 C46 240 41 240 41 244 L41 260 L40 249 C40 245 35 245 35 249 L36 268 Z" fill="#fff" stroke="#111" stroke-width="2" stroke-linejoin="round"/>
<rect x="18.5" y="306.5" width="22" height="23" fill="none" stroke="#111" stroke-width="2" stroke-dasharray="3 3"/>
<path d="M31 335 L20 347" stroke="#333" stroke-width="6.5"/><path d="M29 337 L21.5 345.5" stroke="#f0c844" stroke-width="3"/>
<circle cx="44" cy="321.5" r="16" fill="url(#glass)" stroke="#777" stroke-width="1.8"/>
<path d="M55 311 L55 333 M34 333 L55 333" stroke="#bbb" stroke-width="1.4" stroke-dasharray="3 2" fill="none"/>
<rect x="9" y="362.5" width="62" height="61" rx="4" fill="#dedede" stroke="#b8b8b8" stroke-width="1.4"/>
<path d="M24 374 L52 374 M24 374 L24 405 M52 374 L52 405 M24 405 L52 405" stroke="#333" stroke-width="1.2" stroke-dasharray="2 3" fill="none"/>
<rect x="20.5" y="370.5" width="6" height="6" fill="#eee" stroke="#555" stroke-width="1.3"/>
<rect x="48.5" y="370.5" width="6" height="6" fill="#eee" stroke="#555" stroke-width="1.3"/>
<rect x="20.5" y="401.5" width="6" height="6" fill="#eee" stroke="#555" stroke-width="1.3"/>
<rect x="48.5" y="401.5" width="6" height="6" fill="#eee" stroke="#555" stroke-width="1.3"/>
<path d="M26 372 L55 396 L44 397 L51 411 L45 414 L38 400 L30 407 Z" fill="#fff" stroke="#111" stroke-width="2" stroke-linejoin="round"/>
<path d="M27 436.5 L59 436.5 L59 475 L27 475 Z" fill="url(#roll)" stroke="#999" stroke-width="1.5"/>
<path d="M20.5 438 Q20.5 434 24.5 434 Q28.5 434 28.5 438 L28.5 470 Q28.5 475.5 24.5 475.5 Q20.5 475.5 20.5 470 Z" fill="#ececec" stroke="#999" stroke-width="1.5"/>
<g fill="#6a9bd0" stroke="#3e5f84" stroke-width="1"><path d="M45.5 440 L55.5 450.5 L49.5 450.5 L49.5 457 L42 457 L42 450.5 L36 450.5 Z"/><path d="M29.5 464.5 L38 456 L38 461 L41 461 L41 468 L38 468 L38 473 Z"/><rect x="52.5" y="458.5" width="6" height="6"/><rect x="42.5" y="468.5" width="6.5" height="6.5"/></g>
<path d="M32.6 501.6 L22.7 536 M32.6 501.6 L56.8 512.7" stroke="#111" stroke-width="2"/><path d="M22.7 536 L40 526" stroke="#111" stroke-width="2" stroke-dasharray="2 2"/>
<path d="M48 522 L38 540" stroke="#e8c23a" stroke-width="4.5" stroke-linecap="round"/><path d="M49 522 L60 539" stroke="#b07a22" stroke-width="4.5" stroke-linecap="round"/>
<path d="M37 522 L44 515 L55 514 L52 520 L42 526 Z" fill="#c8c8c8" stroke="#777" stroke-width="1"/><path d="M50 524 L58 514" stroke="#aaa" stroke-width="2"/>
<circle cx="32.6" cy="501.6" r="5" fill="#2f7ce8"/><circle cx="56.8" cy="512.7" r="5" fill="#2f7ce8"/><circle cx="22.7" cy="536" r="5" fill="#2f7ce8"/>
<path d="M28 563 L60 563 L60 603 L28 603 Z" fill="url(#roll)" stroke="#999" stroke-width="1.6"/>
<path d="M20 565 Q20 561 24 561 Q28 561 28 565 L28 598 Q28 604 24 604 Q20 604 20 598 Z" fill="#eee" stroke="#999" stroke-width="1.6"/>
<g transform="translate(46,590)"><rect x="0" y="0" width="18" height="18" rx="4" fill="url(#gplus)" stroke="#4b8650" stroke-width="1"/><rect x="7.3" y="3" width="3.4" height="12" fill="#fff"/><rect x="3" y="7.3" width="12" height="3.4" fill="#fff"/></g>
<path d="M26 634 L37 632 L58 633 L60 660 L42 661 L18 655 Z" fill="#ddd" stroke="#999" stroke-width="1.6"/>
<path d="M26 645 L44 640 L58 641 M22 651 L42 650 L59 652 M35 633 L30 655 M47 633 L43 660" stroke="#aaa" stroke-width="1" fill="none"/>
<g transform="translate(46,654)"><rect x="0" y="0" width="18" height="18" rx="4" fill="url(#gplus)" stroke="#4b8650" stroke-width="1"/><rect x="7.3" y="3" width="3.4" height="12" fill="#fff"/><rect x="3" y="7.3" width="12" height="3.4" fill="#fff"/></g>
<rect x="20.5" y="698.5" width="39" height="27" fill="url(#pic)" stroke="#888" stroke-width="1.6"/>
<path d="M21.5 713 L35 705 L59 713 L59 725 L21.5 725 Z" fill="#c9b052"/>
<g transform="translate(46,718)"><rect x="0" y="0" width="18" height="18" rx="4" fill="url(#gplus)" stroke="#4b8650" stroke-width="1"/><rect x="7.3" y="3" width="3.4" height="12" fill="#fff"/><rect x="3" y="7.3" width="12" height="3.4" fill="#fff"/></g>
<rect x="20.5" y="762.5" width="39" height="27" fill="#fff" stroke="#999" stroke-width="1.6"/>
<text x="40" y="785" text-anchor="middle" font-family='"Liberation Serif", serif' font-size="22" fill="#333">T</text>
<g transform="translate(46,782)"><rect x="0" y="0" width="18" height="18" rx="4" fill="url(#gplus)" stroke="#4b8650" stroke-width="1"/><rect x="7.3" y="3" width="3.4" height="12" fill="#fff"/><rect x="3" y="7.3" width="12" height="3.4" fill="#fff"/></g>
<rect x="23.2" y="823.2" width="7.8" height="7.8" fill="#fde15a" stroke="#f59a23" stroke-width="1.6"/><rect x="23.2" y="835.1" width="7.8" height="7.8" fill="#f2462a" stroke="#c52d17" stroke-width="1.6"/><rect x="23.2" y="847.1" width="7.8" height="7.8" fill="#5fbf5a" stroke="#1d5a2a" stroke-width="1.6"/>
<rect x="34.3" y="828.3" width="11.7" height="3.4" fill="#9a9a9a"/><rect x="34.3" y="840.2" width="17.4" height="3.4" fill="#9a9a9a"/><rect x="34.3" y="852.2" width="7.4" height="3.4" fill="#9a9a9a"/>
<g transform="translate(46,846)"><rect x="0" y="0" width="18" height="18" rx="4" fill="url(#gplus)" stroke="#4b8650" stroke-width="1"/><rect x="7.3" y="3" width="3.4" height="12" fill="#fff"/><rect x="3" y="7.3" width="12" height="3.4" fill="#fff"/></g>
<rect x="18.8" y="898.6" width="42.4" height="6.6" fill="#9c9c9c" stroke="#333" stroke-width="1.6"/><rect x="27.8" y="900.2" width="8.5" height="3.4" fill="#f4f4f4"/><rect x="44" y="900.2" width="8.2" height="3.4" fill="#f4f4f4"/>
<g transform="translate(46,910)"><rect x="0" y="0" width="18" height="18" rx="4" fill="url(#gplus)" stroke="#4b8650" stroke-width="1"/><rect x="7.3" y="3" width="3.4" height="12" fill="#fff"/><rect x="3" y="7.3" width="12" height="3.4" fill="#fff"/></g>
<path d="M39.8 947.5 L56 986 L40.2 976 L24.7 988.4 Z" fill="#6a9bd0" stroke="#2d4e74" stroke-width="1.5" stroke-linejoin="round"/>
<text x="40.2" y="973.7" text-anchor="middle" font-family='"Liberation Sans", sans-serif' font-weight="700" font-size="14.5" fill="#fff">N</text>
<g transform="translate(45,973)"><rect x="0" y="0" width="18" height="18" rx="4" fill="url(#gplus)" stroke="#4b8650" stroke-width="1"/><rect x="7.3" y="3" width="3.4" height="12" fill="#fff"/><rect x="3" y="7.3" width="12" height="3.4" fill="#fff"/></g>
<rect x="21" y="1029.2" width="25.3" height="19.8" fill="#cde6f7" stroke="#86a8c8" stroke-width="1.6"/>
<circle cx="47.2" cy="1032.4" r="11.5" fill="#f7b3b3" stroke="#d26f6f" stroke-width="1.6"/>
<path d="M37 1010.8 L50.5 1034 L25.3 1034 Z" fill="#c6f2bd" stroke="#62a35c" stroke-width="1.6" stroke-linejoin="round"/>
<g transform="translate(46,1039)"><rect x="0" y="0" width="18" height="18" rx="4" fill="url(#gplus)" stroke="#4b8650" stroke-width="1"/><rect x="7.3" y="3" width="3.4" height="12" fill="#fff"/><rect x="3" y="7.3" width="12" height="3.4" fill="#fff"/></g>
<path d="M57 1050 L66 1050 L61.5 1055 Z" fill="#222"/>
<path d="M40 1077 L45.5 1089 L59 1090 L49 1099 L52 1113 L40 1106 L28 1113 L31 1099 L21 1090 L34.5 1089 Z" fill="#fbe7a8" stroke="#e0a050" stroke-width="1.6" stroke-linejoin="round"/>
<g transform="translate(46,1102)"><rect x="0" y="0" width="18" height="18" rx="4" fill="url(#gplus)" stroke="#4b8650" stroke-width="1"/><rect x="7.3" y="3" width="3.4" height="12" fill="#fff"/><rect x="3" y="7.3" width="12" height="3.4" fill="#fff"/></g>
<path d="M23 1177 L52 1148" stroke="#333" stroke-width="1.9"/><path d="M47 1144.8 L59 1141 L55.3 1152.6 Z" fill="#e6e6e6" stroke="#333" stroke-width="1.9" stroke-linejoin="miter"/><rect x="20.4" y="1174" width="5.5" height="5.6" fill="#333"/>
<g transform="translate(46,1166)"><rect x="0" y="0" width="18" height="18" rx="4" fill="url(#gplus)" stroke="#4b8650" stroke-width="1"/><rect x="7.3" y="3" width="3.4" height="12" fill="#fff"/><rect x="3" y="7.3" width="12" height="3.4" fill="#fff"/></g>
<path d="M34.5 1215.5 L40 1220 L45.5 1215.5 M34.5 1222.5 L40 1227 L45.5 1222.5" fill="none" stroke="#333" stroke-width="2"/>
<rect x="630" y="148" width="178" height="38" fill="#000" opacity="0.16" filter="url(#tipsh)"/>
<rect x="627" y="139" width="183.6" height="37.5" fill="#fff" stroke="#111" stroke-width="2"/>
<text x="634.5" y="164.5" font-family='"Liberation Sans", sans-serif' font-size="21.5" fill="#1a1a1a" textLength="165.5" lengthAdjust="spacingAndGlyphs">Export as image</text>
</svg></body></html>
